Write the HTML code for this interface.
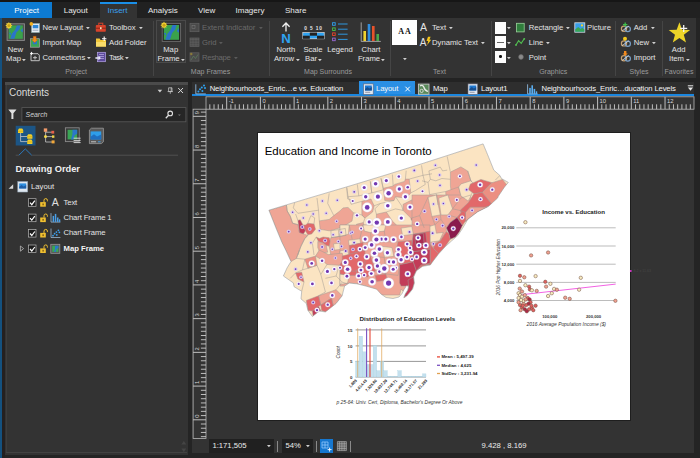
<!DOCTYPE html><html><head><meta charset="utf-8"><title>ArcGIS Pro Layout</title><style>
html,body{margin:0;padding:0}
body{width:700px;height:458px;background:#242424;position:relative;overflow:hidden;font-family:"Liberation Sans",sans-serif;font-size:7.7px;color:#e4e4e4;line-height:10px}
.a{position:absolute;white-space:nowrap}
.t{position:absolute;white-space:nowrap;line-height:10px;height:10px}
.c{text-align:center}
.dis{color:#6b6b6b}
.gl{color:#9b9b9b;font-size:7px}
.sep{position:absolute;width:1px;background:#454545;top:21px;height:55px}
.ar{position:absolute;width:0;height:0;border-left:1.9px solid transparent;border-right:1.9px solid transparent;border-top:2.2px solid #cfcfcf}
.ar.dis{border-top-color:#5a5a5a}
svg{position:absolute;overflow:visible}
</style></head><body>
<div class="a" style="left:0.00px;top:0.00px;width:700.00px;height:18.00px;background:#212121;"></div>
<div class="a" style="left:0.00px;top:0.00px;width:700.00px;height:1.60px;background:#161616;"></div>
<div class="a" style="left:0.00px;top:2.00px;width:52.00px;height:15.50px;background:#0d7bd3;"></div>
<div class="t " style="left:14.20px;top:5.70px;font-size:8px;color:#fff">Project</div>
<div class="t " style="left:63.70px;top:5.70px;font-size:8px;color:#e8e8e8">Layout</div>
<div class="a" style="left:99.50px;top:2.00px;width:37.50px;height:15.60px;background:#333;"></div>
<div class="a" style="left:99.50px;top:2.00px;width:37.50px;height:1.50px;background:#1a8fe8;"></div>
<div class="t " style="left:107.50px;top:5.70px;font-size:8px;color:#3aa0f0">Insert</div>
<div class="t " style="left:148.00px;top:5.70px;font-size:8px;color:#e8e8e8">Analysis</div>
<div class="t " style="left:198.00px;top:5.70px;font-size:8px;color:#e8e8e8">View</div>
<div class="t " style="left:235.50px;top:5.70px;font-size:8px;color:#e8e8e8">Imagery</div>
<div class="t " style="left:285.00px;top:5.70px;font-size:8px;color:#e8e8e8">Share</div>
<div class="a" style="left:0.00px;top:17.50px;width:696.00px;height:60.50px;background:#333;"></div>
<div class="a" style="left:0.00px;top:78.00px;width:700.00px;height:4.00px;background:#232323;"></div>
<div class="sep" style="left:152.5px"></div>
<div class="sep" style="left:268.7px"></div>
<div class="sep" style="left:389.5px"></div>
<div class="sep" style="left:490.5px"></div>
<div class="sep" style="left:615.0px"></div>
<div class="sep" style="left:662.0px"></div>
<div class="t c " style="left:-24.50px;top:45.20px;width:80px;">New</div>
<div class="t c " style="left:-26.50px;top:54.10px;width:80px;">Map</div>
<svg width="4" height="3" viewBox="0 0 4 3" style="left:22.40px;top:58.50px"><path d="M0 0 L3.8 0 L1.9 2.3z" fill="#d0d0d0"/></svg>
<div class="t " style="left:42.50px;top:22.90px;">New Layout</div>
<svg width="4" height="3" viewBox="0 0 4 3" style="left:85.90px;top:27.30px"><path d="M0 0 L3.8 0 L1.9 2.3z" fill="#d0d0d0"/></svg>
<div class="t " style="left:42.50px;top:37.60px;">Import Map</div>
<div class="t " style="left:42.50px;top:52.50px;">Connections</div>
<svg width="4" height="3" viewBox="0 0 4 3" style="left:86.90px;top:56.90px"><path d="M0 0 L3.8 0 L1.9 2.3z" fill="#d0d0d0"/></svg>
<div class="t " style="left:109.00px;top:22.90px;">Toolbox</div>
<svg width="4" height="3" viewBox="0 0 4 3" style="left:139.40px;top:27.30px"><path d="M0 0 L3.8 0 L1.9 2.3z" fill="#d0d0d0"/></svg>
<div class="t " style="left:109.00px;top:37.60px;">Add Folder</div>
<div class="t " style="left:109.00px;top:52.50px;letter-spacing:-.4px">Task</div>
<svg width="4" height="3" viewBox="0 0 4 3" style="left:125.10px;top:56.90px"><path d="M0 0 L3.8 0 L1.9 2.3z" fill="#d0d0d0"/></svg>
<div class="t c gl" style="left:36.20px;top:67.00px;width:80px;">Project</div>
<div class="a" style="left:155.70px;top:19.60px;width:30.60px;height:43.60px;background:#363636;border:1px solid #4a4a4a;box-sizing:border-box"></div>
<div class="t c " style="left:130.70px;top:45.20px;width:80px;">Map</div>
<div class="t c " style="left:128.50px;top:54.10px;width:80px;">Frame</div>
<svg width="4" height="3" viewBox="0 0 4 3" style="left:180.80px;top:58.50px"><path d="M0 0 L3.8 0 L1.9 2.3z" fill="#d0d0d0"/></svg>
<div class="t dis" style="left:202.00px;top:22.90px;">Extent Indicator</div>
<svg width="4" height="3" viewBox="0 0 4 3" style="left:258.60px;top:27.30px"><path d="M0 0 L3.8 0 L1.9 2.3z" fill="#5a5a5a"/></svg>
<div class="t dis" style="left:202.00px;top:37.60px;">Grid</div>
<svg width="4" height="3" viewBox="0 0 4 3" style="left:219.10px;top:42.00px"><path d="M0 0 L3.8 0 L1.9 2.3z" fill="#5a5a5a"/></svg>
<div class="t dis" style="left:202.00px;top:52.50px;letter-spacing:-.35px">Reshape</div>
<svg width="4" height="3" viewBox="0 0 4 3" style="left:233.60px;top:56.90px"><path d="M0 0 L3.8 0 L1.9 2.3z" fill="#5a5a5a"/></svg>
<div class="t c gl" style="left:170.50px;top:67.00px;width:80px;">Map Frames</div>
<div class="t c " style="left:245.80px;top:45.20px;width:80px;">North</div>
<div class="t c " style="left:244.00px;top:54.10px;width:80px;">Arrow</div>
<svg width="4" height="3" viewBox="0 0 4 3" style="left:296.10px;top:58.50px"><path d="M0 0 L3.8 0 L1.9 2.3z" fill="#d0d0d0"/></svg>
<div class="t c " style="left:273.00px;top:45.20px;width:80px;">Scale</div>
<div class="t c " style="left:271.00px;top:54.10px;width:80px;">Bar</div>
<svg width="4" height="3" viewBox="0 0 4 3" style="left:318.10px;top:58.50px"><path d="M0 0 L3.8 0 L1.9 2.3z" fill="#d0d0d0"/></svg>
<div class="t c " style="left:300.00px;top:45.20px;width:80px;">Legend</div>
<div class="t c " style="left:331.00px;top:45.20px;width:80px;">Chart</div>
<div class="t c " style="left:329.00px;top:54.10px;width:80px;">Frame</div>
<svg width="4" height="3" viewBox="0 0 4 3" style="left:381.10px;top:58.50px"><path d="M0 0 L3.8 0 L1.9 2.3z" fill="#d0d0d0"/></svg>
<div class="t c gl" style="left:288.00px;top:67.00px;width:80px;">Map Surrounds</div>
<div class="a" style="left:392.00px;top:19.50px;width:25.00px;height:25.50px;background:#fff;"></div>
<div class="t c" style="left:392px;top:26.6px;width:26px;font-family:'Liberation Serif',serif;font-weight:bold;font-size:8px;color:#111;letter-spacing:.9px">AA</div>
<svg width="4" height="3" viewBox="0 0 4 3" style="left:402.60px;top:57.50px"><path d="M0 0 L3.8 0 L1.9 2.3z" fill="#d0d0d0"/></svg>
<div class="t " style="left:432.00px;top:22.90px;">Text</div>
<svg width="4" height="3" viewBox="0 0 4 3" style="left:448.80px;top:27.30px"><path d="M0 0 L3.8 0 L1.9 2.3z" fill="#d0d0d0"/></svg>
<div class="t " style="left:432.00px;top:37.60px;">Dynamic Text</div>
<svg width="4" height="3" viewBox="0 0 4 3" style="left:480.60px;top:42.00px"><path d="M0 0 L3.8 0 L1.9 2.3z" fill="#d0d0d0"/></svg>
<div class="t c gl" style="left:399.50px;top:67.00px;width:80px;">Text</div>
<div class="a" style="left:494.80px;top:22.00px;width:11.40px;height:12.00px;background:#fdfdfd;"></div>
<svg width="4" height="3" viewBox="0 0 4 3" style="left:507.40px;top:27.30px"><path d="M0 0 L3.8 0 L1.9 2.3z" fill="#d0d0d0"/></svg>
<div class="a" style="left:494.80px;top:35.80px;width:11.40px;height:12.00px;background:#fdfdfd;"></div>
<svg width="4" height="3" viewBox="0 0 4 3" style="left:507.40px;top:42.00px"><path d="M0 0 L3.8 0 L1.9 2.3z" fill="#d0d0d0"/></svg>
<div class="a" style="left:494.80px;top:50.60px;width:11.40px;height:12.00px;background:#fdfdfd;"></div>
<svg width="4" height="3" viewBox="0 0 4 3" style="left:507.40px;top:56.90px"><path d="M0 0 L3.8 0 L1.9 2.3z" fill="#d0d0d0"/></svg>
<div class="a" style="left:497.00px;top:41.50px;width:7.00px;height:0.70px;background:#666;"></div>
<div class="a" style="left:499.30px;top:55.40px;width:2.40px;height:2.40px;background:#111;border-radius:50%"></div>
<div class="t " style="left:528.70px;top:22.90px;">Rectangle</div>
<svg width="4" height="3" viewBox="0 0 4 3" style="left:565.60px;top:27.30px"><path d="M0 0 L3.8 0 L1.9 2.3z" fill="#d0d0d0"/></svg>
<div class="t " style="left:587.00px;top:22.90px;">Picture</div>
<div class="t " style="left:528.70px;top:37.60px;">Line</div>
<svg width="4" height="3" viewBox="0 0 4 3" style="left:546.10px;top:42.00px"><path d="M0 0 L3.8 0 L1.9 2.3z" fill="#d0d0d0"/></svg>
<div class="t " style="left:528.70px;top:52.50px;">Point</div>
<div class="t c gl" style="left:513.20px;top:67.00px;width:80px;">Graphics</div>
<div class="t " style="left:633.70px;top:22.90px;">Add</div>
<svg width="4" height="3" viewBox="0 0 4 3" style="left:650.60px;top:27.30px"><path d="M0 0 L3.8 0 L1.9 2.3z" fill="#d0d0d0"/></svg>
<div class="t " style="left:633.70px;top:37.60px;">New</div>
<svg width="4" height="3" viewBox="0 0 4 3" style="left:651.80px;top:42.00px"><path d="M0 0 L3.8 0 L1.9 2.3z" fill="#d0d0d0"/></svg>
<div class="t " style="left:633.70px;top:52.50px;">Import</div>
<div class="t c gl" style="left:599.00px;top:67.00px;width:80px;">Styles</div>
<div class="t c " style="left:638.70px;top:45.20px;width:80px;">Add</div>
<div class="t c " style="left:636.50px;top:54.10px;width:80px;">Item</div>
<svg width="4" height="3" viewBox="0 0 4 3" style="left:686.40px;top:58.50px"><path d="M0 0 L3.8 0 L1.9 2.3z" fill="#d0d0d0"/></svg>
<div class="t c gl" style="left:639.00px;top:67.00px;width:80px;">Favorites</div>
<svg width="700" height="82" viewBox="0 0 700 82" style="left:0;top:0"><rect x="7.1" y="23.8" width="17.3" height="16.6" fill="#4e4e4e" stroke="#8c8c8c" stroke-width=".9"/><rect x="8.7" y="25.4" width="14.1" height="13.4" fill="#3aa24c"/><path d="M16.9 25.4 l3.7 0 l-1.4 4.3 l-2.8 2.9 l-2.0 6.2 l-4.2 0 l1.7 -5.4 l3.1 -3.5 z" fill="#2b74c8"/><path d="M22.8 28.1 l0 4.3 l-2.3 -1.6 z" fill="#2b74c8"/><path d="M8.7 32.8 l2.2 0 l0 2.6 z" fill="#2b74c8"/><polygon points="12.5,25.6 11.0,26.5 11.4,28.1 9.8,27.7 8.9,29.2 8.0,27.7 6.4,28.1 6.8,26.5 5.3,25.6 6.8,24.7 6.4,23.1 8.0,23.5 8.9,22.0 9.8,23.5 11.4,23.1 11.0,24.7" fill="#f0d030"/><circle cx="8.9" cy="25.6" r="1.5" fill="#c8a018"/><rect x="162.2" y="23.4" width="18.4" height="18.0" fill="#262626" stroke="#6c6c6c" stroke-width=".9"/><rect x="163.8" y="25.0" width="15.2" height="14.8" fill="#3aa24c"/><path d="M172.6 25.0 l4.0 0 l-1.5 4.7 l-3.0 3.3 l-2.1 6.8 l-4.6 0 l1.8 -5.9 l3.3 -3.8 z" fill="#2b74c8"/><path d="M179.0 28.0 l0 4.7 l-2.4 -1.8 z" fill="#2b74c8"/><path d="M163.8 33.1 l2.2 0 l0 2.6 z" fill="#2b74c8"/><polygon points="167.6,25.2 166.1,26.1 166.5,27.7 164.9,27.3 164.0,28.8 163.1,27.3 161.5,27.7 161.9,26.1 160.4,25.2 161.9,24.3 161.5,22.7 163.1,23.1 164.0,21.6 164.9,23.1 166.5,22.7 166.1,24.3" fill="#f0d030"/><circle cx="164.0" cy="25.2" r="1.5" fill="#c8a018"/><rect x="31.5" y="23.5" width="8" height="9" fill="#e9eef5" stroke="#8aa" stroke-width=".6"/><rect x="32.7" y="24.9" width="5.6" height="3.4" fill="#2b86d8"/><rect x="32.7" y="29.7" width="5.6" height="1" fill="#9ab"/><circle cx="31.3" cy="23.9" r="1.8" fill="#f2b01e"/><rect x="30.5" y="38.7" width="9" height="8.5" fill="#3aa655" stroke="#aaa" stroke-width=".7"/><path d="M33 41.2 l4 0 l0 3 l-4 0z" fill="#2b78c9"/><path d="M33.2 36.2 l3 0 l0 3.2 l1.8 0 l-3.3 3.4 l-3.3 -3.4 l1.8 0z" fill="#f28a1e" stroke="#a55208" stroke-width=".3"/><path d="M31 53.7 l7 0 l1.3 1.5 l0 5.5 l-8.3 0z" fill="none" stroke="#d0d0d0" stroke-width=".9"/><path d="M33 57.7 l4 0 M35 55.9 l0 3.6" stroke="#d0d0d0" stroke-width=".9"/><path d="M30 53.4 l3 0 M31.5 51.9 l0 3" stroke="#fff" stroke-width=".9"/><rect x="95.8" y="25.1" width="10" height="6.6" rx=".8" fill="#d8432b"/><rect x="98.8" y="23.2" width="4" height="2.4" fill="none" stroke="#d8432b" stroke-width="1"/><rect x="95.8" y="27.7" width="10" height="1" fill="#8a2415"/><rect x="100" y="27.2" width="1.6" height="2" fill="#f2e6c0"/><path d="M96 38.6 l3.6 0 l1 1.4 l5.4 0 l0 6.6 l-10 0z" fill="#f0c63a"/><path d="M96 42.0 l10 0 l0 4.6 l-10 0z" fill="#f8dc6a"/><path d="M102 38.8 l4.4 0 M104.2 36.6 l0 4.4" stroke="#fff" stroke-width="1.1"/><rect x="97.5" y="52.3" width="8" height="9.4" fill="#5d4a9c" stroke="#b7a8e8" stroke-width=".7"/><path d="M99 54.5 l5 0 M99 56.5 l5 0 M99 58.5 l5 0" stroke="#cfc6f0" stroke-width=".6"/><path d="M95.4 57.2 l3 0 l0 -1.6 l2.4 2.4 l-2.4 2.4 l0 -1.6 l-3 0z" fill="#e8e8f8"/><rect x="190" y="23.3" width="9" height="8.4" fill="#4a4a4a" stroke="#626262" stroke-width=".7"/><rect x="190" y="38.0" width="9" height="8.4" fill="#4a4a4a" stroke="#626262" stroke-width=".7"/><rect x="190" y="52.8" width="9" height="8.4" fill="#4a4a4a" stroke="#626262" stroke-width=".7"/><rect x="192" y="25.5" width="3" height="3" fill="none" stroke="#777" stroke-width=".6"/><path d="M190 42.2 l9 0 M193 38 l0 8.4 M196 38 l0 8.4 M190 39.6 l9 0 M190 44.8 l9 0" stroke="#666" stroke-width=".5"/><path d="M191 60 l2.5 -4 l2 2.5 l2.5 -4" stroke="#5c7a5c" stroke-width=".8" fill="none"/><circle cx="191.3" cy="54" r="1.2" fill="#8a7a3a"/><path d="M286 23 l0 8.4 M282.4 26.8 l3.6 -3.8 l3.6 3.8" stroke="#f0f0f0" stroke-width="1.3" fill="none"/><text x="286" y="42.5" text-anchor="middle" font-family="Liberation Sans,sans-serif" font-weight="bold" font-size="13.2" fill="#2ea3f2">N</text><text x="313.5" y="30" text-anchor="middle" font-family="Liberation Sans,sans-serif" font-weight="bold" font-size="4.8" fill="#e8e8e8" letter-spacing=".9" xml:space="preserve">0 5 10</text><rect x="302.8" y="32.6" width="21.4" height="6.2" fill="#2ea3f2" stroke="#e0e0e0" stroke-width=".7"/><rect x="302.8" y="35.7" width="7" height="3.1" fill="#222"/><rect x="309.8" y="32.6" width="7.2" height="3.1" fill="#222"/><rect x="317" y="35.7" width="7.2" height="3.1" fill="#222"/><rect x="332.6" y="22.7" width="2.6" height="2.6" fill="none" stroke="#2ea3f2" stroke-width=".9"/><path d="M338 24.0 l9.6 0" stroke="#2ea3f2" stroke-width=".9"/><rect x="332.6" y="27.9" width="2.6" height="2.6" fill="none" stroke="#4ac04a" stroke-width=".9"/><path d="M338 29.2 l9.6 0" stroke="#2ea3f2" stroke-width=".9"/><rect x="332.6" y="32.9" width="2.6" height="2.6" fill="none" stroke="#e8452b" stroke-width=".9"/><path d="M338 34.2 l9.6 0" stroke="#2ea3f2" stroke-width=".9"/><rect x="332.6" y="38.1" width="2.6" height="2.6" fill="none" stroke="#9a6ad8" stroke-width=".9"/><path d="M338 39.4 l9.6 0" stroke="#2ea3f2" stroke-width=".9"/><path d="M361.2 22.4 l0 19 l19.6 0" stroke="#bdbdbd" stroke-width=".8" fill="none"/><rect x="363.4" y="31" width="2.6" height="10" fill="#f0d22e"/><rect x="367.7" y="24" width="2.6" height="17" fill="#2e8ee0"/><rect x="372" y="26" width="2.6" height="15" fill="#e8532b"/><rect x="376.4" y="34" width="2.6" height="7" fill="#4aa84a"/><text x="423.5" y="31" text-anchor="middle" font-family="Liberation Sans,sans-serif" font-size="10.5" fill="#e4e4e4">A</text><text x="423" y="45.7" text-anchor="middle" font-family="Liberation Sans,sans-serif" font-size="10" fill="#e4e4e4">A</text><path d="M428 36.8 l2.6 0 l-1.2 3 l1.8 0 l-4 5.2 l1 -3.9 l-1.7 0z" fill="#f5c518"/><rect x="516.4" y="23.3" width="7.8" height="8.6" fill="#2f7d3c" stroke="#9ad09a" stroke-width=".8"/><path d="M516 45 l2.6 -4.4 l2.6 2.8 l3 -4.6" stroke="#52c052" stroke-width="1.1" fill="none"/><circle cx="516" cy="45" r=".9" fill="#52c052"/><circle cx="524.3" cy="38.8" r=".9" fill="#52c052"/><circle cx="521" cy="57" r="2.4" fill="#8a8a8a" stroke="#6a6a6a" stroke-width=".6"/><rect x="574.8" y="22.8" width="10" height="9.4" fill="#3a9ee8" stroke="#e0e0e0" stroke-width=".8"/><path d="M575.2 31.8 l0 -2.2 l3 -2.6 l2.4 2 l1.6 -1.2 l2.2 1.8 l0 2.2z" fill="#3aa655"/><rect x="575.2" y="29.8" width="9.2" height="2" fill="#2e6fc0" opacity=".0"/><circle cx="582" cy="25.4" r="1.1" fill="#f5d22e"/><circle cx="624" cy="28.7" r="2.6" fill="none" stroke="#c8a070" stroke-width="1.2"/><circle cx="627.8" cy="29.1" r="2.6" fill="none" stroke="#7aa0c8" stroke-width="1.2"/><path d="M622 31.0 l7 -5" stroke="#d8d8d8" stroke-width=".8"/><circle cx="624" cy="43.4" r="2.6" fill="none" stroke="#c8a070" stroke-width="1.2"/><circle cx="627.8" cy="43.8" r="2.6" fill="none" stroke="#7aa0c8" stroke-width="1.2"/><path d="M622 45.7 l7 -5" stroke="#d8d8d8" stroke-width=".8"/><circle cx="624" cy="58.2" r="2.6" fill="none" stroke="#c8a070" stroke-width="1.2"/><circle cx="627.8" cy="58.6" r="2.6" fill="none" stroke="#7aa0c8" stroke-width="1.2"/><path d="M622 60.5 l7 -5" stroke="#d8d8d8" stroke-width=".8"/><path d="M623 24.6 l4.4 0 M625.2 22.4 l0 4.4" stroke="#3ec04a" stroke-width="1.3"/><circle cx="625" cy="38.8" r="2" fill="#f2c81e"/><path d="M624 51 l2.4 0 l0 2.4 l1.4 0 l-2.6 2.6 l-2.6 -2.6 l1.4 0z" fill="#f28a1e"/><polygon points="679.4,22.2 682.1,29.7 690.1,29.9 683.8,34.8 686.0,42.5 679.4,38.0 672.8,42.5 675.0,34.8 668.7,29.9 676.7,29.7" fill="#ecd428"/><path d="M680.2 28.4 l7 0 M683.7 24.9 l0 7" stroke="#f4f4f4" stroke-width="1.3"/></svg>
<div class="a" style="left:0.00px;top:18.00px;width:1.90px;height:440.00px;background:#14517f;"></div>
<div class="a" style="left:1.90px;top:78.00px;width:3.20px;height:380.00px;background:#242020;"></div>
<div class="a" style="left:5.00px;top:82.00px;width:183.00px;height:373.00px;background:#333;"></div>
<div class="a" style="left:6.20px;top:84.50px;width:0.60px;height:368.00px;background:#3c3c3c;"></div>
<div class="a" style="left:5.00px;top:82.00px;width:183.00px;height:2.50px;background:#4b4b4b;"></div>
<div class="a" style="left:6.20px;top:452.40px;width:181.00px;height:0.80px;background:#424242;"></div>
<div class="t " style="left:9.00px;top:87.60px;font-size:10px;color:#dcdcdc;line-height:12px;height:12px;margin-top:-1px">Contents</div>
<svg width="700" height="458" viewBox="0 0 700 458" style="left:0;top:0"><path d="M157.6 89.8 l4.6 0 l-2.3 2.6z" fill="#d0d0d0"/><path d="M168.6 87.8 l3.4 0 l0 3.7 l-3.4 0z M171.2 87.8 l0 3.7 M167.6 91.6 l5.4 0 M170.3 91.6 l0 2.2" stroke="#c8c8c8" stroke-width=".75" fill="none"/><path d="M178.2 88 l4.8 5 M183 88 l-4.8 5" stroke="#d8d8d8" stroke-width="1"/><path d="M8.3 109.4 l8.2 0 l-3.1 3.8 l0 5.8 l-2 0 l0 -5.8z" fill="#e0e0e0"/><rect x="21.9" y="107.6" width="164" height="14.2" fill="#262626" stroke="#5a5a5a" stroke-width=".8"/><circle cx="170.2" cy="113.4" r="2.3" fill="none" stroke="#e0e0e0" stroke-width="1.1"/><path d="M168.6 115.2 l-2.8 3" stroke="#e0e0e0" stroke-width="1.3"/><path d="M178 114.4 l2.8 0 l-1.4 1.6z" fill="#777"/><rect x="15.7" y="125.8" width="19.8" height="19.7" fill="#1c5585"/><path d="M20.6 133 l0 8.6 l7 0 M20.6 136.5 l7 0" stroke="#c8c8c8" stroke-width=".8" fill="none"/><path d="M18.0 130.1 l1 -1.5 l3.2 0 l1 1.5 l0 3 l-5.2 0z" fill="#f2cf2a"/><path d="M18.0 131.2 l5.2 0" stroke="#b89010" stroke-width=".5"/><path d="M27.2 135.7 l1 -1.5 l3.2 0 l1 1.5 l0 3 l-5.2 0z" fill="#f2cf2a"/><path d="M27.2 136.8 l5.2 0" stroke="#b89010" stroke-width=".5"/><path d="M27.2 140.9 l1 -1.5 l3.2 0 l1 1.5 l0 3 l-5.2 0z" fill="#f2cf2a"/><path d="M27.2 142.0 l5.2 0" stroke="#b89010" stroke-width=".5"/><path d="M45.6 131.5 l0 10.5 l6.5 0 M45.6 132.2 l6.5 0 M45.6 136.6 l6.5 0" stroke="#c8c8c8" stroke-width=".8" fill="none"/><rect x="43.8" y="128.4" width="3.4" height="3.4" fill="#f29a6a"/><rect x="51.4" y="130.8" width="2.8" height="2.8" fill="#e8604a"/><circle cx="45.5" cy="136.6" r="1.5" fill="#f2d84a"/><rect x="52" y="135.4" width="2.4" height="2.4" fill="#f2d84a"/><rect x="51.6" y="140.4" width="3" height="3" fill="#f2a83a"/><rect x="65.4" y="127.8" width="13.8" height="13.8" fill="#3a3a3a" stroke="#8a8a8a" stroke-width=".9"/><rect x="67.6" y="129.8" width="9.6" height="9.6" fill="#3aa655"/><path d="M72.5 129.8 l4.7 0 l0 4 l-2.6 1.4 l-1 4.2 l-2.6 0 l1.3 -4.6z" fill="#2b78c9"/><path d="M73.6 138.2 l7 0 M73.6 140.4 l7 0 M73.6 142.6 l7 0" stroke="#e0e0e0" stroke-width=".9"/><path d="M89.4 130 l2 -1.8 l12 0 l0 13.6 l-2 1.8 l-12 0z" fill="#5a5a5a" stroke="#9a9a9a" stroke-width=".8"/><rect x="90.6" y="131.4" width="10.6" height="8" fill="#2e9eea"/><path d="M90.6 139.4 l0 -2.6 l3.4 -2.6 l3 2.2 l4.2 -2 l0 5z" fill="#1f6fc0"/><path d="M91 141.8 l5 0" stroke="#ddd" stroke-width=".8"/><path d="M98 141.8 l2.6 0" stroke="#3aa0f0" stroke-width=".9"/><path d="M15.7 155.2 l3.2 0 M31.7 155.2 l146.3 0" stroke="#585858" stroke-width=".8" fill="none"/><path d="M18.9 155.2 l6.4 -6.3 l6.4 6.3" stroke="#2a7fca" stroke-width=".9" fill="none"/><path d="M13.2 184.2 l0 4.6 l-4.6 0z" fill="#d8d8d8"/><path d="M20.4 246 l3.2 2.6 l-3.2 2.6z" fill="none" stroke="#c8c8c8" stroke-width=".7"/><rect x="17.8" y="181.6" width="9.8" height="10.4" fill="#dfe7f0" stroke="#9ab" stroke-width=".6"/><rect x="19.2" y="183.4" width="7" height="5" fill="#2e8ee0"/><path d="M19.2 188.4 l0 -1.6 l2.4 -1.8 l2 1.4 l2.6 -1.4 l0 3.4z" fill="#1f5fa8"/><rect x="28.4" y="198.7" width="7.6" height="7.6" fill="#1c1c1c" stroke="#b8b8b8" stroke-width=".7"/><path d="M30 202.7 l1.8 2 l3 -4" stroke="#fff" stroke-width="1.2" fill="none"/><rect x="40.2" y="202.1" width="5.6" height="4.6" fill="#f0c030"/><path d="M44 202.3 l0 -2 a1.7 1.7 0 0 1 3.4 0 l0 1" stroke="#f0c030" stroke-width="1" fill="none"/><rect x="42.5" y="203.5" width="1.2" height="1.8" fill="#6a4a10"/><rect x="28.4" y="214.1" width="7.6" height="7.6" fill="#1c1c1c" stroke="#b8b8b8" stroke-width=".7"/><path d="M30 218.1 l1.8 2 l3 -4" stroke="#fff" stroke-width="1.2" fill="none"/><rect x="40.2" y="217.5" width="5.6" height="4.6" fill="#f0c030"/><path d="M44 217.7 l0 -2 a1.7 1.7 0 0 1 3.4 0 l0 1" stroke="#f0c030" stroke-width="1" fill="none"/><rect x="42.5" y="218.9" width="1.2" height="1.8" fill="#6a4a10"/><rect x="28.4" y="229.5" width="7.6" height="7.6" fill="#1c1c1c" stroke="#b8b8b8" stroke-width=".7"/><path d="M30 233.5 l1.8 2 l3 -4" stroke="#fff" stroke-width="1.2" fill="none"/><rect x="40.2" y="232.9" width="5.6" height="4.6" fill="#f0c030"/><path d="M44 233.1 l0 -2 a1.7 1.7 0 0 1 3.4 0 l0 1" stroke="#f0c030" stroke-width="1" fill="none"/><rect x="42.5" y="234.3" width="1.2" height="1.8" fill="#6a4a10"/><rect x="28.4" y="245.0" width="7.6" height="7.6" fill="#1c1c1c" stroke="#b8b8b8" stroke-width=".7"/><path d="M30 249.0 l1.8 2 l3 -4" stroke="#fff" stroke-width="1.2" fill="none"/><rect x="40.2" y="248.4" width="5.6" height="4.6" fill="#f0c030"/><path d="M44 248.6 l0 -2 a1.7 1.7 0 0 1 3.4 0 l0 1" stroke="#f0c030" stroke-width="1" fill="none"/><rect x="42.5" y="249.8" width="1.2" height="1.8" fill="#6a4a10"/><text x="55.3" y="206.2" text-anchor="middle" font-family="Liberation Sans,sans-serif" font-size="10.5" fill="#e0e0e0">A</text><path d="M51 213.1 l0 9 l9.4 0" stroke="#a8c8e8" stroke-width=".7" fill="none"/><rect x="52.6" y="215.9" width="1.5" height="6" fill="#4aa0e8"/><rect x="54.8" y="213.9" width="1.5" height="8" fill="#4aa0e8"/><rect x="57" y="217.5" width="1.5" height="4.4" fill="#4aa0e8"/><rect x="59" y="219.3" width="1.3" height="2.6" fill="#4aa0e8"/><path d="M51 228.5 l0 9 l9.4 0" stroke="#a8c8e8" stroke-width=".7" fill="none"/><circle cx="53.0" cy="235.7" r=".9" fill="#3aa0f0"/><circle cx="54.6" cy="233.7" r=".9" fill="#3aa0f0"/><circle cx="56.4" cy="232.1" r=".9" fill="#3aa0f0"/><circle cx="56.8" cy="234.9" r=".9" fill="#3aa0f0"/><circle cx="58.4" cy="230.3" r=".9" fill="#3aa0f0"/><circle cx="59.4" cy="232.3" r=".9" fill="#3aa0f0"/><rect x="50.8" y="244.3" width="9" height="9" fill="#555" stroke="#9a9a9a" stroke-width=".8"/><rect x="52.2" y="245.7" width="6.2" height="6.2" fill="#3aa655"/><path d="M55 245.7 l3.4 0 l0 2.4 l-2 1.2 l-.6 2.6 l-1.8 0 l1 -3z" fill="#2b78c9"/><path d="M181.4 444.6 l2.4 -3.6 l2.4 3.6z M181.4 448.6 l2.4 3.6 l2.4 -3.6z" fill="#454545"/></svg><div class="t" style="left:25.6px;top:109.6px;font-style:italic;font-size:6.9px;color:#d0d0d0">Search</div><div class="t" style="left:15.4px;top:162.8px;font-weight:bold;font-size:9.3px;line-height:12px;height:12px;color:#f0f0f0">Drawing Order</div><div class="t" style="left:31px;top:182.2px">Layout</div><div class="t" style="left:63.5px;top:197.6px;letter-spacing:-.12px">Text</div><div class="t" style="left:63.5px;top:213px;letter-spacing:-.12px">Chart Frame 1</div><div class="t" style="left:63.5px;top:228.4px;letter-spacing:-.12px">Chart Frame</div><div class="t" style="left:63.5px;top:243.9px;font-weight:bold;color:#f4f4f4">Map Frame</div>
<div class="a" style="left:191.80px;top:82.00px;width:502.70px;height:371.00px;background:#333;"></div>
<div class="a" style="left:191.8px;top:82px;width:502.7px;height:12px;background:#2e2e2e"></div><div class="a" style="left:359px;top:81px;width:56px;height:14px;background:#2a8fe4"></div><div class="a" style="left:191.8px;top:94px;width:502.7px;height:2.2px;background:#1a86de"></div><div class="t" style="left:209.7px;top:84.1px;color:#f6f6f6;letter-spacing:-.14px">Neighbourhoods_Enric…e vs. Education</div><div class="t" style="left:376.0px;top:84.1px;color:#f6f6f6;letter-spacing:-.14px">Layout</div><div class="t" style="left:433.0px;top:84.1px;color:#f6f6f6;letter-spacing:-.14px">Map</div><div class="t" style="left:481.0px;top:84.1px;color:#f6f6f6;letter-spacing:-.14px">Layout1</div><div class="t" style="left:541.5px;top:84.1px;color:#f6f6f6;letter-spacing:-.14px">Neighbourhoods_Enric…ducation Levels</div><svg width="700" height="458" viewBox="0 0 700 458" style="left:0;top:0"><g transform="translate(0 .9)"><path d="M195.8 83.4 l0 9.6 l10 0" stroke="#9ac8f0" stroke-width=".8" fill="none"/><circle cx="198.4" cy="90.6" r="1" fill="#2ea3f2"/><circle cx="200.0" cy="88.4" r="1" fill="#2ea3f2"/><circle cx="201.8" cy="86.6" r="1" fill="#2ea3f2"/><circle cx="202.4" cy="90.0" r="1" fill="#2ea3f2"/><circle cx="204.0" cy="84.6" r="1" fill="#2ea3f2"/><circle cx="205.0" cy="87.2" r="1" fill="#2ea3f2"/><rect x="363.6" y="83.0" width="9.6" height="10.4" fill="#dfe7f0" stroke="#667" stroke-width=".6"/><rect x="365.0" y="84.6" width="6.8" height="5" fill="#1f78d0"/><path d="M365.0 89.6 l0 -1.6 l2.4 -1.8 l2 1.4 l2.4 -1.4 l0 3.4z" fill="#174f90"/><path d="M365.2 91.4 l5 0" stroke="#778" stroke-width=".7"/><rect x="468.0" y="83.0" width="9.6" height="10.4" fill="#dfe7f0" stroke="#667" stroke-width=".6"/><rect x="469.4" y="84.6" width="6.8" height="5" fill="#1f78d0"/><path d="M469.4 89.6 l0 -1.6 l2.4 -1.8 l2 1.4 l2.4 -1.4 l0 3.4z" fill="#174f90"/><path d="M469.6 91.4 l5 0" stroke="#778" stroke-width=".7"/><path d="M405.4 85.8 l4.4 4.6 M409.8 85.8 l-4.4 4.6" stroke="#fff" stroke-width="1"/><rect x="418.4" y="83.2" width="10.6" height="10.2" fill="#5a8a5a" stroke="#c8c8c8" stroke-width=".9"/><path d="M420 85 q3 -1.4 4 1.6 q.6 3 4 4" stroke="#e8e8e8" stroke-width="1.3" fill="none"/><circle cx="421.6" cy="90" r="1.6" fill="none" stroke="#e0e0e0" stroke-width=".9"/><path d="M527.6 83.4 l0 9.6 l10 0" stroke="#9ac8f0" stroke-width=".8" fill="none"/><rect x="529.2" y="87" width="1.6" height="6" fill="#5aaef0"/><rect x="531.4" y="84.4" width="1.6" height="8.6" fill="#5aaef0"/><rect x="533.6" y="88" width="1.6" height="5" fill="#5aaef0"/><rect x="535.8" y="90.4" width="1.4" height="2.6" fill="#5aaef0"/><path d="M687.8 84.9 l5.4 0" stroke="#e8e8e8" stroke-width="1"/><path d="M687.9 86.7 l5.2 0 l-2.6 3.2z" fill="#e8e8e8"/></g><rect x="206" y="96.8" width="488" height="12.4" fill="#333" stroke="#b8b8b8" stroke-width=".8"/><rect x="193.1" y="109.2" width="12.9" height="329.2" fill="#333" stroke="#b8b8b8" stroke-width=".8"/><path d="M209.82 104.3 l0 4.9 M214.03 104.3 l0 4.9 M218.25 104.3 l0 4.9 M222.46 104.3 l0 4.9 M226.68 96.8 l0 12.4 M230.89 104.3 l0 4.9 M235.11 104.3 l0 4.9 M239.32 104.3 l0 4.9 M243.54 104.3 l0 4.9 M247.75 104.3 l0 4.9 M251.97 104.3 l0 4.9 M256.19 104.3 l0 4.9 M260.40 96.8 l0 12.4 M264.61 104.3 l0 4.9 M268.83 104.3 l0 4.9 M273.04 104.3 l0 4.9 M277.26 104.3 l0 4.9 M281.47 104.3 l0 4.9 M285.69 104.3 l0 4.9 M289.90 104.3 l0 4.9 M294.12 96.8 l0 12.4 M298.33 104.3 l0 4.9 M302.55 104.3 l0 4.9 M306.76 104.3 l0 4.9 M310.98 104.3 l0 4.9 M315.19 104.3 l0 4.9 M319.41 104.3 l0 4.9 M323.62 104.3 l0 4.9 M327.84 96.8 l0 12.4 M332.05 104.3 l0 4.9 M336.27 104.3 l0 4.9 M340.48 104.3 l0 4.9 M344.70 104.3 l0 4.9 M348.91 104.3 l0 4.9 M353.13 104.3 l0 4.9 M357.34 104.3 l0 4.9 M361.56 96.8 l0 12.4 M365.77 104.3 l0 4.9 M369.99 104.3 l0 4.9 M374.20 104.3 l0 4.9 M378.42 104.3 l0 4.9 M382.63 104.3 l0 4.9 M386.85 104.3 l0 4.9 M391.06 104.3 l0 4.9 M395.28 96.8 l0 12.4 M399.50 104.3 l0 4.9 M403.71 104.3 l0 4.9 M407.92 104.3 l0 4.9 M412.14 104.3 l0 4.9 M416.35 104.3 l0 4.9 M420.57 104.3 l0 4.9 M424.78 104.3 l0 4.9 M429.00 96.8 l0 12.4 M433.21 104.3 l0 4.9 M437.43 104.3 l0 4.9 M441.64 104.3 l0 4.9 M445.86 104.3 l0 4.9 M450.07 104.3 l0 4.9 M454.29 104.3 l0 4.9 M458.50 104.3 l0 4.9 M462.72 96.8 l0 12.4 M466.93 104.3 l0 4.9 M471.15 104.3 l0 4.9 M475.37 104.3 l0 4.9 M479.58 104.3 l0 4.9 M483.79 104.3 l0 4.9 M488.01 104.3 l0 4.9 M492.22 104.3 l0 4.9 M496.44 96.8 l0 12.4 M500.65 104.3 l0 4.9 M504.87 104.3 l0 4.9 M509.08 104.3 l0 4.9 M513.30 104.3 l0 4.9 M517.51 104.3 l0 4.9 M521.73 104.3 l0 4.9 M525.94 104.3 l0 4.9 M530.16 96.8 l0 12.4 M534.38 104.3 l0 4.9 M538.59 104.3 l0 4.9 M542.80 104.3 l0 4.9 M547.02 104.3 l0 4.9 M551.23 104.3 l0 4.9 M555.45 104.3 l0 4.9 M559.66 104.3 l0 4.9 M563.88 96.8 l0 12.4 M568.10 104.3 l0 4.9 M572.31 104.3 l0 4.9 M576.52 104.3 l0 4.9 M580.74 104.3 l0 4.9 M584.95 104.3 l0 4.9 M589.17 104.3 l0 4.9 M593.38 104.3 l0 4.9 M597.60 96.8 l0 12.4 M601.81 104.3 l0 4.9 M606.03 104.3 l0 4.9 M610.24 104.3 l0 4.9 M614.46 104.3 l0 4.9 M618.67 104.3 l0 4.9 M622.89 104.3 l0 4.9 M627.11 104.3 l0 4.9 M631.32 96.8 l0 12.4 M635.53 104.3 l0 4.9 M639.75 104.3 l0 4.9 M643.96 104.3 l0 4.9 M648.18 104.3 l0 4.9 M652.39 104.3 l0 4.9 M656.61 104.3 l0 4.9 M660.83 104.3 l0 4.9 M665.04 96.8 l0 12.4 M669.25 104.3 l0 4.9 M673.47 104.3 l0 4.9 M677.68 104.3 l0 4.9 M681.90 104.3 l0 4.9 M686.12 104.3 l0 4.9 M690.33 104.3 l0 4.9 M200.9 436.66 l5.1 0 M200.9 432.44 l5.1 0 M200.9 428.23 l5.1 0 M200.9 424.01 l5.1 0 M193.1 419.80 l12.9 0 M200.9 415.59 l5.1 0 M200.9 411.37 l5.1 0 M200.9 407.16 l5.1 0 M200.9 402.94 l5.1 0 M200.9 398.73 l5.1 0 M200.9 394.51 l5.1 0 M200.9 390.30 l5.1 0 M193.1 386.08 l12.9 0 M200.9 381.87 l5.1 0 M200.9 377.65 l5.1 0 M200.9 373.44 l5.1 0 M200.9 369.22 l5.1 0 M200.9 365.00 l5.1 0 M200.9 360.79 l5.1 0 M200.9 356.58 l5.1 0 M193.1 352.36 l12.9 0 M200.9 348.14 l5.1 0 M200.9 343.93 l5.1 0 M200.9 339.72 l5.1 0 M200.9 335.50 l5.1 0 M200.9 331.29 l5.1 0 M200.9 327.07 l5.1 0 M200.9 322.86 l5.1 0 M193.1 318.64 l12.9 0 M200.9 314.43 l5.1 0 M200.9 310.21 l5.1 0 M200.9 306.00 l5.1 0 M200.9 301.78 l5.1 0 M200.9 297.56 l5.1 0 M200.9 293.35 l5.1 0 M200.9 289.13 l5.1 0 M193.1 284.92 l12.9 0 M200.9 280.71 l5.1 0 M200.9 276.49 l5.1 0 M200.9 272.27 l5.1 0 M200.9 268.06 l5.1 0 M200.9 263.85 l5.1 0 M200.9 259.63 l5.1 0 M200.9 255.42 l5.1 0 M193.1 251.20 l12.9 0 M200.9 246.99 l5.1 0 M200.9 242.77 l5.1 0 M200.9 238.56 l5.1 0 M200.9 234.34 l5.1 0 M200.9 230.13 l5.1 0 M200.9 225.91 l5.1 0 M200.9 221.70 l5.1 0 M193.1 217.48 l12.9 0 M200.9 213.27 l5.1 0 M200.9 209.05 l5.1 0 M200.9 204.84 l5.1 0 M200.9 200.62 l5.1 0 M200.9 196.41 l5.1 0 M200.9 192.19 l5.1 0 M200.9 187.98 l5.1 0 M193.1 183.76 l12.9 0 M200.9 179.55 l5.1 0 M200.9 175.33 l5.1 0 M200.9 171.12 l5.1 0 M200.9 166.90 l5.1 0 M200.9 162.69 l5.1 0 M200.9 158.47 l5.1 0 M200.9 154.25 l5.1 0 M193.1 150.04 l12.9 0 M200.9 145.83 l5.1 0 M200.9 141.61 l5.1 0 M200.9 137.40 l5.1 0 M200.9 133.18 l5.1 0 M200.9 128.97 l5.1 0 M200.9 124.75 l5.1 0 M200.9 120.54 l5.1 0 M193.1 116.32 l12.9 0 M200.9 112.11 l5.1 0 " stroke="#c6c6c6" stroke-width=".95" fill="none"/><text x="228.7" y="102.6" font-family="Liberation Sans,sans-serif" font-size="5.8" fill="#d8d8d8">-1</text><text x="262.4" y="102.6" font-family="Liberation Sans,sans-serif" font-size="5.8" fill="#d8d8d8">0</text><text x="296.1" y="102.6" font-family="Liberation Sans,sans-serif" font-size="5.8" fill="#d8d8d8">1</text><text x="329.8" y="102.6" font-family="Liberation Sans,sans-serif" font-size="5.8" fill="#d8d8d8">2</text><text x="363.6" y="102.6" font-family="Liberation Sans,sans-serif" font-size="5.8" fill="#d8d8d8">3</text><text x="397.3" y="102.6" font-family="Liberation Sans,sans-serif" font-size="5.8" fill="#d8d8d8">4</text><text x="431.0" y="102.6" font-family="Liberation Sans,sans-serif" font-size="5.8" fill="#d8d8d8">5</text><text x="464.7" y="102.6" font-family="Liberation Sans,sans-serif" font-size="5.8" fill="#d8d8d8">6</text><text x="498.4" y="102.6" font-family="Liberation Sans,sans-serif" font-size="5.8" fill="#d8d8d8">7</text><text x="532.2" y="102.6" font-family="Liberation Sans,sans-serif" font-size="5.8" fill="#d8d8d8">8</text><text x="565.9" y="102.6" font-family="Liberation Sans,sans-serif" font-size="5.8" fill="#d8d8d8">9</text><text x="599.6" y="102.6" font-family="Liberation Sans,sans-serif" font-size="5.8" fill="#d8d8d8">10</text><text x="633.3" y="102.6" font-family="Liberation Sans,sans-serif" font-size="5.8" fill="#d8d8d8">11</text><text x="667.0" y="102.6" font-family="Liberation Sans,sans-serif" font-size="5.8" fill="#d8d8d8">12</text><text transform="translate(199.4 417.8) rotate(-90)" font-family="Liberation Sans,sans-serif" font-size="5.8" fill="#d8d8d8">0</text><text transform="translate(199.4 384.1) rotate(-90)" font-family="Liberation Sans,sans-serif" font-size="5.8" fill="#d8d8d8">1</text><text transform="translate(199.4 350.4) rotate(-90)" font-family="Liberation Sans,sans-serif" font-size="5.8" fill="#d8d8d8">2</text><text transform="translate(199.4 316.6) rotate(-90)" font-family="Liberation Sans,sans-serif" font-size="5.8" fill="#d8d8d8">3</text><text transform="translate(199.4 282.9) rotate(-90)" font-family="Liberation Sans,sans-serif" font-size="5.8" fill="#d8d8d8">4</text><text transform="translate(199.4 249.2) rotate(-90)" font-family="Liberation Sans,sans-serif" font-size="5.8" fill="#d8d8d8">5</text><text transform="translate(199.4 215.5) rotate(-90)" font-family="Liberation Sans,sans-serif" font-size="5.8" fill="#d8d8d8">6</text><text transform="translate(199.4 181.8) rotate(-90)" font-family="Liberation Sans,sans-serif" font-size="5.8" fill="#d8d8d8">7</text><text transform="translate(199.4 148.0) rotate(-90)" font-family="Liberation Sans,sans-serif" font-size="5.8" fill="#d8d8d8">8</text><text transform="translate(199.4 114.3) rotate(-90)" font-family="Liberation Sans,sans-serif" font-size="5.8" fill="#d8d8d8">9</text></svg><div class="a" style="left:258.3px;top:133px;width:372.2px;height:287.3px;background:#fff;box-shadow:0 0 0 .9px #1c1c1c"></div><div class="a" style="left:264.7px;top:144.3px;font-size:11.45px;line-height:14px;color:#000">Education and Income in Toronto</div><svg width="700" height="458" viewBox="0 0 700 458" style="left:0;top:0"><clipPath id="mc"><polygon points="268.9,210.2 286.4,204.9 317.0,195.7 352.0,185.3 387.0,174.6 422.0,163.7 452.0,154.0 483.1,143.9 487.7,154.9 493.8,170.1 499.9,175.5 501.5,178.6 508.3,182.4 504.5,187.0 498.4,196.1 497.6,198.0 488.4,206.5 477.7,211.8 467.8,219.4 462.4,228.6 457.8,235.5 451.7,240.8 444.9,247.0 438.7,253.8 433.4,260.7 430.3,265.0 422.5,266.3 416.4,270.8 413.6,277.0 414.4,283.0 412.6,289.0 409.8,292.6 406.8,296.0 403.8,297.8 405.2,294.0 407.6,290.2 408.6,286.6 406.6,285.6 404.0,289.6 402.0,293.6 399.0,297.0 393.0,298.5 386.0,297.5 381.0,294.0 376.7,289.2 366.0,286.1 356.8,283.8 349.2,283.1 344.6,286.1 343.0,292.2 342.2,295.8 336.1,303.5 325.4,311.9 319.3,311.1 312.4,316.5 307.9,310.4 306.3,303.5 301.0,298.9 301.7,291.3 294.1,286.7 293.3,282.9 283.4,276.0 287.0,268.0 291.0,261.5 285.7,250.0 281.9,242.3 276.5,229.3"/></clipPath><g clip-path="url(#mc)"><polygon points="268.9,210.2 286.4,204.9 317.0,195.7 352.0,185.3 387.0,174.6 422.0,163.7 452.0,154.0 483.1,143.9 487.7,154.9 493.8,170.1 499.9,175.5 501.5,178.6 508.3,182.4 504.5,187.0 498.4,196.1 497.6,198.0 488.4,206.5 477.7,211.8 467.8,219.4 462.4,228.6 457.8,235.5 451.7,240.8 444.9,247.0 438.7,253.8 433.4,260.7 430.3,265.0 422.5,266.3 416.4,270.8 413.6,277.0 414.4,283.0 412.6,289.0 409.8,292.6 406.8,296.0 403.8,297.8 405.2,294.0 407.6,290.2 408.6,286.6 406.6,285.6 404.0,289.6 402.0,293.6 399.0,297.0 393.0,298.5 386.0,297.5 381.0,294.0 376.7,289.2 366.0,286.1 356.8,283.8 349.2,283.1 344.6,286.1 343.0,292.2 342.2,295.8 336.1,303.5 325.4,311.9 319.3,311.1 312.4,316.5 307.9,310.4 306.3,303.5 301.0,298.9 301.7,291.3 294.1,286.7 293.3,282.9 283.4,276.0 287.0,268.0 291.0,261.5 285.7,250.0 281.9,242.3 276.5,229.3" fill="#fbe4c2"/><polygon points="268.9,210.2 286.4,204.9 287.2,211.0 290.3,216.3 292.6,223.2 297.9,224.7 299.4,232.4 303.3,233.9 307.8,235.4 304.8,238.5 301.0,246.1 299.4,250.0 296.4,258.4 291.0,261.5 285.7,250.0 281.9,242.3 276.5,229.3" fill="#efa595" stroke="#a39a94" stroke-width=".5"/><polygon points="297.9,220.4 300.2,219.8 303.0,225.0 305.5,230.8 303.3,233.9 299.4,232.4 298.7,226.3" fill="#c23c58" stroke="#a39a94" stroke-width=".5"/><polygon points="305.5,225.0 307.8,223.2 314.0,224.0 315.5,229.3 311.7,233.9 307.8,234.7 305.5,230.8 303.0,225.0" fill="#e2686a" stroke="#a39a94" stroke-width=".5"/><polygon points="319.3,220.9 329.2,219.4 333.8,215.6 339.9,211.0 343.0,207.9 348.0,207.4 353.5,212.7 352.0,221.1 342.0,227.2 335.3,229.3 329.2,230.8 320.1,229.3" fill="#efa595" stroke="#a39a94" stroke-width=".5"/><polygon points="316.2,237.0 319.3,238.5 323.1,237.0 329.2,237.7 330.8,243.1 329.2,246.1 326.2,245.4 323.1,243.1 318.5,241.5" fill="#e2686a" stroke="#a39a94" stroke-width=".5"/><polygon points="317.8,241.5 323.1,243.1 326.2,245.4 327.7,252.2 320.1,253.0 317.8,247.6" fill="#efa595" stroke="#a39a94" stroke-width=".5"/><polygon points="330.8,237.7 346.0,235.4 352.0,236.2 352.0,255.0 330.8,255.0 329.2,246.1" fill="#efa595" stroke="#a39a94" stroke-width=".5"/><polygon points="333.5,243.8 341.8,243.1 342.5,249.2 334.4,250.1" fill="#fbe4c2" stroke="#a39a94" stroke-width=".5"/><polygon points="383.3,188.3 393.2,186.0 394.7,184.4 404.6,181.4 405.4,179.1 409.2,179.1 410.8,192.9 406.2,198.2 395.5,196.7 394.0,200.5 384.8,200.5" fill="#efa595" stroke="#a39a94" stroke-width=".5"/><polygon points="361.9,201.3 371.0,199.0 374.1,205.8 372.6,212.0 364.9,218.1 361.9,215.0" fill="#efa595" stroke="#a39a94" stroke-width=".5"/><polygon points="376.4,214.2 386.3,212.0 392.4,221.1 401.6,230.0 376.4,230.0" fill="#efa595" stroke="#a39a94" stroke-width=".5"/><polygon points="403.1,204.3 415.3,198.2 424.5,197.4 432.0,204.3 432.0,230.0 421.5,230.0 410.8,218.1 403.1,210.4" fill="#efa595" stroke="#a39a94" stroke-width=".5"/><polygon points="413.8,216.5 421.5,217.3 423.0,230.0 415.3,225.7 410.8,218.8" fill="#e2686a" stroke="#a39a94" stroke-width=".5"/><polygon points="356.5,224.2 363.4,222.6 364.9,230.0 356.5,230.0" fill="#efa595" stroke="#a39a94" stroke-width=".5"/><polygon points="450.4,172.1 460.9,166.9 467.6,171.0 471.5,182.7 460.9,185.5 459.3,197.9 452.1,199.3 450.4,185.5" fill="#efa595" stroke="#a39a94" stroke-width=".5"/><polygon points="445.7,191.5 458.7,187.0 461.0,196.1 467.8,200.7 467.8,205.0 446.4,205.0" fill="#efa595" stroke="#a39a94" stroke-width=".5"/><polygon points="422.0,196.1 426.6,195.4 427.3,205.0 422.0,205.0" fill="#efa595" stroke="#a39a94" stroke-width=".5"/><polygon points="412.0,195.0 470.8,195.0 469.3,204.2 473.1,206.5 470.1,207.2 465.5,212.6 462.4,211.0 457.1,217.6 450.2,222.5 446.4,227.9 446.4,231.7 440.3,240.8 434.9,243.9 433.4,248.5 427.3,245.4 421.2,245.4 412.0,243.9" fill="#efa595" stroke="#a39a94" stroke-width=".5"/><polygon points="428.0,197.3 436.4,195.0 440.3,214.9 431.9,216.4" fill="#fbe4c2" stroke="#a39a94" stroke-width=".5"/><polygon points="438.7,198.1 447.9,195.0 452.5,208.8 447.9,214.9 441.0,214.9" fill="#fbe4c2" stroke="#a39a94" stroke-width=".5"/><polygon points="424.2,227.9 434.9,224.8 436.4,233.2 443.3,232.4 439.5,240.8 428.8,242.4 426.5,234.7" fill="#fbe4c2" stroke="#a39a94" stroke-width=".5"/><polygon points="461.0,183.9 470.9,180.8 472.4,182.4 474.0,188.5 469.4,199.2 467.8,200.7 461.0,196.1 458.7,187.0" fill="#fbe4c2" stroke="#a39a94" stroke-width=".5"/><polygon points="470.4,184.1 480.9,179.4 492.0,182.7 482.3,192.4 474.0,193.8 468.4,189.6" fill="#e2686a" stroke="#a39a94" stroke-width=".5"/><polygon points="492.0,182.7 502.5,179.4 507.2,185.5 500.3,196.0 492.0,204.3 482.3,192.4" fill="#ec8f82" stroke="#a39a94" stroke-width=".5"/><polygon points="468.4,202.6 474.0,193.8 482.3,192.4 492.0,204.3 480.9,210.4 471.2,216.0 465.7,221.5 460.1,210.4" fill="#e2686a" stroke="#a39a94" stroke-width=".5"/><polygon points="465.5,212.6 470.1,207.2 483.8,207.2 488.4,206.5 477.7,211.8 467.8,219.4 465.5,221.0" fill="#efa595" stroke="#a39a94" stroke-width=".5"/><polygon points="457.1,217.6 462.4,211.0 465.5,212.6 465.5,221.0 462.4,225.6" fill="#e2686a" stroke="#a39a94" stroke-width=".5"/><polygon points="446.4,227.9 450.2,222.5 457.1,217.6 462.4,225.6 459.4,231.7 455.5,237.0 450.2,239.3 448.7,233.2" fill="#8a1a4c" stroke="#a39a94" stroke-width=".5"/><polygon points="440.3,240.8 446.4,231.7 448.7,233.2 450.2,239.3 444.9,247.0 438.7,253.8 433.4,248.5 434.9,243.9" fill="#e2686a" stroke="#a39a94" stroke-width=".5"/><polygon points="412.0,243.9 421.2,245.4 428.8,242.4 433.4,248.5 438.7,253.8 430.3,265.0 412.0,265.0" fill="#e2686a" stroke="#a39a94" stroke-width=".5"/><polygon points="412.0,234.7 421.2,230.1 426.5,234.7 428.8,242.4 421.2,245.4 412.0,243.9" fill="#c23c58" stroke="#a39a94" stroke-width=".5"/><polygon points="340.0,225.0 430.0,225.0 430.0,263.2 416.4,270.8 411.8,283.1 404.2,292.2 401.1,289.2 399.6,295.0 376.7,295.0 366.0,286.1 356.8,283.8 349.2,283.1 344.6,286.1 340.0,286.1" fill="#efa595" stroke="#a39a94" stroke-width=".5"/><polygon points="340.0,225.0 349.2,225.0 348.4,234.2 340.0,236.5" fill="#fbe4c2" stroke="#a39a94" stroke-width=".5"/><polygon points="362.9,225.0 385.8,225.0 384.3,231.1 370.6,232.6 364.4,231.1" fill="#fbe4c2" stroke="#a39a94" stroke-width=".5"/><polygon points="348.4,240.3 359.9,238.8 360.6,243.3 349.2,245.6" fill="#fbe4c2" stroke="#a39a94" stroke-width=".5"/><polygon points="382.0,246.4 392.0,247.6 393.8,256.3 384.6,257.4" fill="#fbe4c2" stroke="#a39a94" stroke-width=".5"/><polygon points="340.0,251.0 346.9,249.4 349.2,255.6 340.0,257.9" fill="#fbe4c2" stroke="#a39a94" stroke-width=".5"/><polygon points="340.0,273.9 349.2,275.4 347.6,283.1 340.0,284.6" fill="#fbe4c2" stroke="#a39a94" stroke-width=".5"/><polygon points="401.1,228.1 411.8,226.5 413.3,234.2 402.6,235.7" fill="#fbe4c2" stroke="#a39a94" stroke-width=".5"/><polygon points="349.2,245.6 362.9,242.6 364.4,255.6 355.3,258.9 349.5,254.0" fill="#e2686a" stroke="#a39a94" stroke-width=".5"/><polygon points="355.3,258.9 370.6,256.3 375.4,270.8 367.5,277.0 356.8,275.4" fill="#e2686a" stroke="#a39a94" stroke-width=".5"/><polygon points="340.0,257.9 349.2,255.6 355.3,258.9 356.8,275.4 349.2,275.4 340.0,273.9" fill="#e2686a" stroke="#a39a94" stroke-width=".5"/><polygon points="398.1,241.8 411.8,240.3 413.3,261.7 399.6,264.7 395.0,255.6" fill="#e2686a" stroke="#a39a94" stroke-width=".5"/><polygon points="375.1,275.4 385.8,273.9 387.4,280.0 376.7,281.5" fill="#e2686a" stroke="#a39a94" stroke-width=".5"/><polygon points="413.3,234.2 430.0,231.1 430.0,263.2 422.5,266.3 416.4,270.8 413.3,261.7 411.8,247.9" fill="#e2686a" stroke="#a39a94" stroke-width=".5"/><polygon points="413.3,234.2 425.6,232.6 427.9,249.4 419.5,251.0 413.3,251.7 411.8,247.9" fill="#c23c58" stroke="#a39a94" stroke-width=".5"/><polygon points="399.6,264.7 407.2,263.2 413.3,261.7 416.4,270.8 413.3,277.0 411.8,283.1 407.2,286.1 401.1,286.1 399.6,283.1" fill="#c23c58" stroke="#a39a94" stroke-width=".5"/><polygon points="413.3,251.7 419.5,251.0 430.0,249.4 430.0,263.2 421.0,265.0 416.4,270.8 413.3,261.7" fill="#c23c58" stroke="#a39a94" stroke-width=".5"/><polygon points="414.9,234.5 423.3,233.6 424.0,243.3 415.6,244.6" fill="#a82c52" stroke="#a39a94" stroke-width=".5"/><polygon points="413.6,277.0 414.4,283.0 412.6,289.0 409.8,292.6 406.8,296.0 403.8,297.8 405.2,294.0 407.6,290.2 408.6,286.6 408.0,280.0" fill="#c23c58" stroke="#a39a94" stroke-width=".5"/><polygon points="304.8,259.2 315.5,256.1 317.0,265.3 307.9,268.3" fill="#ec8f82" stroke="#a39a94" stroke-width=".5"/><polygon points="319.3,250.0 328.5,254.6 342.2,253.1 343.8,259.2 339.2,265.3 327.0,264.5 320.8,259.2 315.5,256.1" fill="#efa595" stroke="#a39a94" stroke-width=".5"/><polygon points="295.6,272.9 301.7,272.2 304.0,282.1 297.9,279.0" fill="#e2686a" stroke="#a39a94" stroke-width=".5"/><polygon points="318.5,295.8 336.1,289.7 342.2,295.8 336.1,303.5 333.8,308.1 331.5,298.1 320.8,305.0" fill="#efa595" stroke="#a39a94" stroke-width=".5"/><polygon points="306.3,300.4 318.5,295.8 320.8,305.0 312.4,311.1 307.9,310.4" fill="#e2686a" stroke="#a39a94" stroke-width=".5"/><polygon points="320.8,305.0 331.5,298.1 333.8,308.1 325.4,311.9 321.6,310.4" fill="#e2686a" stroke="#a39a94" stroke-width=".5"/><polygon points="312.4,311.1 318.5,306.5 320.8,310.4 313.2,316.5" fill="#c23c58" stroke="#a39a94" stroke-width=".5"/><polygon points="342.2,256.1 365.0,250.0 365.0,265.3 354.5,271.4 342.2,269.9" fill="#e2686a" stroke="#a39a94" stroke-width=".5"/><polyline points="286.4,204.6 287.2,211.0 290.3,216.3 292.6,223.2 297.9,224.7" fill="none" stroke="#a39a94" stroke-width=".5"/><polyline points="294.9,201.8 293.3,207.9 297.9,213.3 318.5,210.2 317.0,198.0" fill="none" stroke="#a39a94" stroke-width=".5"/><polyline points="318.5,210.2 319.3,220.9" fill="none" stroke="#a39a94" stroke-width=".5"/><polyline points="329.2,193.4 327.7,203.3 333.8,215.6" fill="none" stroke="#a39a94" stroke-width=".5"/><polyline points="346.8,188.1 347.6,198.8 352.0,200.3" fill="none" stroke="#a39a94" stroke-width=".5"/><polyline points="295.6,214.0 297.9,220.4" fill="none" stroke="#a39a94" stroke-width=".5"/><polyline points="307.8,223.2 310.9,215.6 314.7,217.9 314.0,224.0" fill="none" stroke="#a39a94" stroke-width=".5"/><polyline points="330.8,230.8 345.3,228.5 346.0,235.4 331.5,237.7 330.8,230.8" fill="none" stroke="#a39a94" stroke-width=".5"/><polyline points="338.4,229.8 338.9,236.6" fill="none" stroke="#a39a94" stroke-width=".5"/><polyline points="307.8,235.4 304.8,238.5 301.0,246.1 297.9,255.0" fill="none" stroke="#a39a94" stroke-width=".5"/><polyline points="316.2,237.0 312.4,243.1 314.0,255.0" fill="none" stroke="#a39a94" stroke-width=".5"/><polyline points="357.3,184.4 358.8,195.9 371.8,192.9 370.3,181.4" fill="none" stroke="#a39a94" stroke-width=".5"/><polyline points="370.3,181.4 371.8,192.9 383.3,189.8 381.0,178.3" fill="none" stroke="#a39a94" stroke-width=".5"/><polyline points="381.0,178.3 383.3,188.3" fill="none" stroke="#a39a94" stroke-width=".5"/><polyline points="392.4,174.5 393.2,186.0" fill="none" stroke="#a39a94" stroke-width=".5"/><polyline points="406.2,170.7 405.4,179.1" fill="none" stroke="#a39a94" stroke-width=".5"/><polyline points="421.5,165.3 423.0,175.3 432.0,173.8" fill="none" stroke="#a39a94" stroke-width=".5"/><polyline points="409.2,179.1 423.0,175.3 425.3,184.4 415.3,190.6 410.8,192.9" fill="none" stroke="#a39a94" stroke-width=".5"/><polyline points="346.6,186.7 348.1,196.7 358.8,195.9" fill="none" stroke="#a39a94" stroke-width=".5"/><polyline points="348.1,196.7 351.2,204.3 361.9,201.3" fill="none" stroke="#a39a94" stroke-width=".5"/><polyline points="374.1,205.8 380.2,203.5 394.0,200.5" fill="none" stroke="#a39a94" stroke-width=".5"/><polyline points="376.4,214.2 374.9,208.9 380.2,203.5" fill="none" stroke="#a39a94" stroke-width=".5"/><polyline points="386.3,212.0 395.5,208.9 403.1,210.4" fill="none" stroke="#a39a94" stroke-width=".5"/><polyline points="353.5,212.7 361.9,215.0 364.9,218.1 363.4,222.6" fill="none" stroke="#a39a94" stroke-width=".5"/><polyline points="395.5,196.7 401.6,205.8 403.1,210.4" fill="none" stroke="#a39a94" stroke-width=".5"/><polyline points="447.2,156.4 450.3,171.7" fill="none" stroke="#a39a94" stroke-width=".5"/><polyline points="428.9,170.9 440.3,167.1 442.6,170.9 447.2,170.1" fill="none" stroke="#a39a94" stroke-width=".5"/><polyline points="428.9,170.9 430.4,179.3 435.8,180.8 441.9,178.5 450.3,179.3" fill="none" stroke="#a39a94" stroke-width=".5"/><polyline points="422.0,180.8 428.1,182.4 430.4,179.3" fill="none" stroke="#a39a94" stroke-width=".5"/><polyline points="428.1,182.4 429.6,194.6 445.7,191.5" fill="none" stroke="#a39a94" stroke-width=".5"/><polyline points="436.5,193.8 438.0,205.0" fill="none" stroke="#a39a94" stroke-width=".5"/><polyline points="467.8,170.9 470.9,180.8 472.4,182.4" fill="none" stroke="#a39a94" stroke-width=".5"/><polyline points="495.3,180.1 499.9,175.5" fill="none" stroke="#a39a94" stroke-width=".5"/><polyline points="412.0,217.9 419.6,215.6 428.0,197.3" fill="none" stroke="#a39a94" stroke-width=".5"/><polyline points="419.6,215.6 424.2,227.9" fill="none" stroke="#a39a94" stroke-width=".5"/><polyline points="431.9,216.4 434.9,224.8" fill="none" stroke="#a39a94" stroke-width=".5"/><polyline points="440.3,214.9 441.0,219.4 446.4,227.9" fill="none" stroke="#a39a94" stroke-width=".5"/><polyline points="434.9,224.8 441.0,219.4" fill="none" stroke="#a39a94" stroke-width=".5"/><polyline points="447.9,214.9 457.1,217.6" fill="none" stroke="#a39a94" stroke-width=".5"/><polyline points="452.5,208.8 462.4,211.0" fill="none" stroke="#a39a94" stroke-width=".5"/><polyline points="470.8,195.0 460.9,198.1 452.5,208.8" fill="none" stroke="#a39a94" stroke-width=".5"/><polyline points="299.4,250.0 296.4,258.4 304.8,259.2" fill="none" stroke="#a39a94" stroke-width=".5"/><polyline points="304.8,259.2 302.5,269.9 295.6,272.9" fill="none" stroke="#a39a94" stroke-width=".5"/><polyline points="302.5,269.9 307.9,268.3 317.0,265.3 320.8,274.4 325.4,292.0 318.5,295.8" fill="none" stroke="#a39a94" stroke-width=".5"/><polyline points="320.8,274.4 327.0,264.5" fill="none" stroke="#a39a94" stroke-width=".5"/><polyline points="325.4,278.3 336.1,276.0 342.2,282.1 336.1,289.7" fill="none" stroke="#a39a94" stroke-width=".5"/><polyline points="336.1,276.0 339.2,265.3" fill="none" stroke="#a39a94" stroke-width=".5"/><polyline points="342.2,282.1 351.4,285.1" fill="none" stroke="#a39a94" stroke-width=".5"/><polyline points="304.0,282.1 301.7,291.3" fill="none" stroke="#a39a94" stroke-width=".5"/><polyline points="290.3,278.3 295.6,272.9" fill="none" stroke="#a39a94" stroke-width=".5"/><polyline points="370.6,232.6 371.3,241.8 362.9,242.6" fill="none" stroke="#a39a94" stroke-width=".5"/><polyline points="384.3,231.1 385.8,241.8 371.3,241.8" fill="none" stroke="#a39a94" stroke-width=".5"/><polyline points="385.8,241.8 398.1,241.8" fill="none" stroke="#a39a94" stroke-width=".5"/><polyline points="370.6,256.3 384.3,257.4 385.8,273.9" fill="none" stroke="#a39a94" stroke-width=".5"/><polyline points="393.8,256.3 395.0,255.6" fill="none" stroke="#a39a94" stroke-width=".5"/><polyline points="375.4,270.8 385.8,273.9 398.1,275.4 399.6,264.7" fill="none" stroke="#a39a94" stroke-width=".5"/><polyline points="349.2,225.0 352.2,239.5" fill="none" stroke="#a39a94" stroke-width=".5"/><polyline points="359.9,238.8 362.9,225.0" fill="none" stroke="#a39a94" stroke-width=".5"/></g><polygon points="268.9,210.2 286.4,204.9 317.0,195.7 352.0,185.3 387.0,174.6 422.0,163.7 452.0,154.0 483.1,143.9 487.7,154.9 493.8,170.1 499.9,175.5 501.5,178.6 508.3,182.4 504.5,187.0 498.4,196.1 497.6,198.0 488.4,206.5 477.7,211.8 467.8,219.4 462.4,228.6 457.8,235.5 451.7,240.8 444.9,247.0 438.7,253.8 433.4,260.7 430.3,265.0 422.5,266.3 416.4,270.8 413.6,277.0 414.4,283.0 412.6,289.0 409.8,292.6 406.8,296.0 403.8,297.8 405.2,294.0 407.6,290.2 408.6,286.6 406.6,285.6 404.0,289.6 402.0,293.6 399.0,297.0 393.0,298.5 386.0,297.5 381.0,294.0 376.7,289.2 366.0,286.1 356.8,283.8 349.2,283.1 344.6,286.1 343.0,292.2 342.2,295.8 336.1,303.5 325.4,311.9 319.3,311.1 312.4,316.5 307.9,310.4 306.3,303.5 301.0,298.9 301.7,291.3 294.1,286.7 293.3,282.9 283.4,276.0 287.0,268.0 291.0,261.5 285.7,250.0 281.9,242.3 276.5,229.3" fill="none" stroke="#9a9a9a" stroke-width=".6"/><circle cx="303.3" cy="217.9" r="1.70" fill="#ddd3f3" stroke="#d4c4ea" stroke-width=".3"/><circle cx="303.3" cy="217.9" r="0.75" fill="#7238b2"/><circle cx="319.3" cy="230.8" r="1.70" fill="#ddd3f3" stroke="#d4c4ea" stroke-width=".3"/><circle cx="319.3" cy="230.8" r="0.75" fill="#7238b2"/><circle cx="435.4" cy="165.3" r="1.70" fill="#ddd3f3" stroke="#d4c4ea" stroke-width=".3"/><circle cx="435.4" cy="165.3" r="0.75" fill="#7238b2"/><circle cx="433.5" cy="204.1" r="1.70" fill="#ddd3f3" stroke="#d4c4ea" stroke-width=".3"/><circle cx="433.5" cy="204.1" r="0.75" fill="#7238b2"/><circle cx="443.4" cy="203.5" r="1.70" fill="#ddd3f3" stroke="#d4c4ea" stroke-width=".3"/><circle cx="443.4" cy="203.5" r="0.75" fill="#7238b2"/><circle cx="449.1" cy="216.4" r="1.70" fill="#ddd3f3" stroke="#d4c4ea" stroke-width=".3"/><circle cx="449.1" cy="216.4" r="0.75" fill="#7238b2"/><circle cx="306.8" cy="204.9" r="1.70" fill="#ddd3f3" stroke="#d4c4ea" stroke-width=".3"/><circle cx="306.8" cy="204.9" r="0.75" fill="#7238b2"/><circle cx="322.4" cy="201.0" r="1.70" fill="#ddd3f3" stroke="#d4c4ea" stroke-width=".3"/><circle cx="322.4" cy="201.0" r="0.75" fill="#7238b2"/><circle cx="292.6" cy="212.2" r="1.70" fill="#ddd3f3" stroke="#d4c4ea" stroke-width=".3"/><circle cx="292.6" cy="212.2" r="0.75" fill="#7238b2"/><circle cx="313.2" cy="214.0" r="1.70" fill="#ddd3f3" stroke="#d4c4ea" stroke-width=".3"/><circle cx="313.2" cy="214.0" r="0.75" fill="#7238b2"/><circle cx="326.2" cy="213.3" r="1.70" fill="#ddd3f3" stroke="#d4c4ea" stroke-width=".3"/><circle cx="326.2" cy="213.3" r="0.75" fill="#7238b2"/><circle cx="336.6" cy="221.2" r="1.70" fill="#ddd3f3" stroke="#d4c4ea" stroke-width=".3"/><circle cx="336.6" cy="221.2" r="0.75" fill="#7238b2"/><circle cx="333.1" cy="234.7" r="1.70" fill="#ddd3f3" stroke="#d4c4ea" stroke-width=".3"/><circle cx="333.1" cy="234.7" r="0.75" fill="#7238b2"/><circle cx="332.3" cy="249.2" r="1.70" fill="#ddd3f3" stroke="#d4c4ea" stroke-width=".3"/><circle cx="332.3" cy="249.2" r="0.75" fill="#7238b2"/><circle cx="350.6" cy="233.1" r="1.70" fill="#ddd3f3" stroke="#d4c4ea" stroke-width=".3"/><circle cx="350.6" cy="233.1" r="0.75" fill="#7238b2"/><circle cx="350.7" cy="258.3" r="1.70" fill="#ddd3f3" stroke="#d4c4ea" stroke-width=".3"/><circle cx="350.7" cy="258.3" r="0.75" fill="#7238b2"/><circle cx="335.4" cy="257.9" r="1.70" fill="#ddd3f3" stroke="#d4c4ea" stroke-width=".3"/><circle cx="335.4" cy="257.9" r="0.75" fill="#7238b2"/><circle cx="417.6" cy="181.1" r="1.70" fill="#ddd3f3" stroke="#d4c4ea" stroke-width=".3"/><circle cx="417.6" cy="181.1" r="0.78" fill="#7238b2"/><circle cx="439.6" cy="175.0" r="1.70" fill="#ddd3f3" stroke="#d4c4ea" stroke-width=".3"/><circle cx="439.6" cy="175.0" r="0.78" fill="#7238b2"/><circle cx="440.0" cy="185.4" r="1.70" fill="#ddd3f3" stroke="#d4c4ea" stroke-width=".3"/><circle cx="440.0" cy="185.4" r="0.78" fill="#7238b2"/><circle cx="476.2" cy="165.1" r="1.70" fill="#ddd3f3" stroke="#d4c4ea" stroke-width=".3"/><circle cx="476.2" cy="165.1" r="0.78" fill="#7238b2"/><circle cx="436.4" cy="219.4" r="1.70" fill="#ddd3f3" stroke="#d4c4ea" stroke-width=".3"/><circle cx="436.4" cy="219.4" r="0.78" fill="#7238b2"/><circle cx="433.4" cy="243.9" r="1.70" fill="#ddd3f3" stroke="#d4c4ea" stroke-width=".3"/><circle cx="433.4" cy="243.9" r="0.78" fill="#7238b2"/><circle cx="337.3" cy="200.3" r="1.70" fill="#ddd3f3" stroke="#d4c4ea" stroke-width=".3"/><circle cx="337.3" cy="200.3" r="0.78" fill="#7238b2"/><circle cx="309.8" cy="229.0" r="1.70" fill="#ddd3f3" stroke="#d4c4ea" stroke-width=".3"/><circle cx="309.8" cy="229.0" r="0.78" fill="#7238b2"/><circle cx="341.2" cy="232.4" r="1.70" fill="#ddd3f3" stroke="#d4c4ea" stroke-width=".3"/><circle cx="341.2" cy="232.4" r="0.78" fill="#7238b2"/><circle cx="310.9" cy="242.8" r="1.70" fill="#ddd3f3" stroke="#d4c4ea" stroke-width=".3"/><circle cx="310.9" cy="242.8" r="0.78" fill="#7238b2"/><circle cx="338.4" cy="241.5" r="1.70" fill="#ddd3f3" stroke="#d4c4ea" stroke-width=".3"/><circle cx="338.4" cy="241.5" r="0.78" fill="#7238b2"/><circle cx="341.5" cy="246.4" r="1.70" fill="#ddd3f3" stroke="#d4c4ea" stroke-width=".3"/><circle cx="341.5" cy="246.4" r="0.78" fill="#7238b2"/><circle cx="307.8" cy="251.9" r="1.70" fill="#ddd3f3" stroke="#d4c4ea" stroke-width=".3"/><circle cx="307.8" cy="251.9" r="0.78" fill="#7238b2"/><circle cx="352.2" cy="232.3" r="1.70" fill="#ddd3f3" stroke="#d4c4ea" stroke-width=".3"/><circle cx="352.2" cy="232.3" r="0.78" fill="#7238b2"/><circle cx="353.0" cy="249.4" r="1.70" fill="#ddd3f3" stroke="#d4c4ea" stroke-width=".3"/><circle cx="353.0" cy="249.4" r="0.78" fill="#7238b2"/><circle cx="301.0" cy="277.2" r="1.70" fill="#ddd3f3" stroke="#d4c4ea" stroke-width=".3"/><circle cx="301.0" cy="277.2" r="0.78" fill="#7238b2"/><circle cx="414.3" cy="170.4" r="1.87" fill="#ddd3f3" stroke="#d4c4ea" stroke-width=".3"/><circle cx="414.3" cy="170.4" r="0.91" fill="#7238b2"/><circle cx="354.2" cy="191.8" r="1.87" fill="#ddd3f3" stroke="#d4c4ea" stroke-width=".3"/><circle cx="354.2" cy="191.8" r="0.91" fill="#7238b2"/><circle cx="424.5" cy="211.2" r="1.87" fill="#ddd3f3" stroke="#d4c4ea" stroke-width=".3"/><circle cx="424.5" cy="211.2" r="0.91" fill="#7238b2"/><circle cx="466.6" cy="189.7" r="1.87" fill="#ddd3f3" stroke="#d4c4ea" stroke-width=".3"/><circle cx="466.6" cy="189.7" r="0.91" fill="#7238b2"/><circle cx="442.6" cy="225.6" r="1.87" fill="#ddd3f3" stroke="#d4c4ea" stroke-width=".3"/><circle cx="442.6" cy="225.6" r="0.91" fill="#7238b2"/><circle cx="472.1" cy="210.3" r="1.87" fill="#ddd3f3" stroke="#d4c4ea" stroke-width=".3"/><circle cx="472.1" cy="210.3" r="0.91" fill="#7238b2"/><circle cx="432.6" cy="233.2" r="1.87" fill="#ddd3f3" stroke="#d4c4ea" stroke-width=".3"/><circle cx="432.6" cy="233.2" r="0.91" fill="#7238b2"/><circle cx="440.0" cy="245.1" r="1.87" fill="#ddd3f3" stroke="#d4c4ea" stroke-width=".3"/><circle cx="440.0" cy="245.1" r="0.91" fill="#7238b2"/><circle cx="302.2" cy="227.0" r="1.87" fill="#ddd3f3" stroke="#d4c4ea" stroke-width=".3"/><circle cx="302.2" cy="227.0" r="0.91" fill="#7238b2"/><circle cx="288.7" cy="231.6" r="1.87" fill="#ddd3f3" stroke="#d4c4ea" stroke-width=".3"/><circle cx="288.7" cy="231.6" r="0.91" fill="#7238b2"/><circle cx="325.1" cy="240.5" r="1.87" fill="#ddd3f3" stroke="#d4c4ea" stroke-width=".3"/><circle cx="325.1" cy="240.5" r="0.91" fill="#7238b2"/><circle cx="322.1" cy="246.9" r="1.87" fill="#ddd3f3" stroke="#d4c4ea" stroke-width=".3"/><circle cx="322.1" cy="246.9" r="0.91" fill="#7238b2"/><circle cx="345.7" cy="251.0" r="1.87" fill="#ddd3f3" stroke="#d4c4ea" stroke-width=".3"/><circle cx="345.7" cy="251.0" r="0.91" fill="#7238b2"/><circle cx="409.5" cy="231.9" r="1.87" fill="#ddd3f3" stroke="#d4c4ea" stroke-width=".3"/><circle cx="409.5" cy="231.9" r="0.91" fill="#7238b2"/><circle cx="354.1" cy="242.6" r="1.87" fill="#ddd3f3" stroke="#d4c4ea" stroke-width=".3"/><circle cx="354.1" cy="242.6" r="0.91" fill="#7238b2"/><circle cx="295.6" cy="269.1" r="1.87" fill="#ddd3f3" stroke="#d4c4ea" stroke-width=".3"/><circle cx="295.6" cy="269.1" r="0.91" fill="#7238b2"/><circle cx="313.2" cy="302.4" r="1.87" fill="#ddd3f3" stroke="#d4c4ea" stroke-width=".3"/><circle cx="313.2" cy="302.4" r="0.91" fill="#7238b2"/><circle cx="352.7" cy="201.0" r="2.14" fill="#fff" stroke="#d4c4ea" stroke-width=".3"/><circle cx="352.7" cy="201.0" r="1.04" fill="#7238b2"/><circle cx="422.5" cy="191.3" r="2.14" fill="#fff" stroke="#d4c4ea" stroke-width=".3"/><circle cx="422.5" cy="191.3" r="1.04" fill="#7238b2"/><circle cx="361.1" cy="228.5" r="2.14" fill="#fff" stroke="#d4c4ea" stroke-width=".3"/><circle cx="361.1" cy="228.5" r="1.04" fill="#7238b2"/><circle cx="374.9" cy="228.8" r="2.14" fill="#fff" stroke="#d4c4ea" stroke-width=".3"/><circle cx="374.9" cy="228.8" r="1.04" fill="#7238b2"/><circle cx="459.9" cy="176.3" r="2.14" fill="#fff" stroke="#d4c4ea" stroke-width=".3"/><circle cx="459.9" cy="176.3" r="1.04" fill="#7238b2"/><circle cx="480.5" cy="199.2" r="2.14" fill="#fff" stroke="#d4c4ea" stroke-width=".3"/><circle cx="480.5" cy="199.2" r="1.04" fill="#7238b2"/><circle cx="456.8" cy="199.9" r="2.14" fill="#fff" stroke="#d4c4ea" stroke-width=".3"/><circle cx="456.8" cy="199.9" r="1.04" fill="#7238b2"/><circle cx="462.1" cy="217.6" r="2.14" fill="#fff" stroke="#d4c4ea" stroke-width=".3"/><circle cx="462.1" cy="217.6" r="1.04" fill="#7238b2"/><circle cx="412.0" cy="259.2" r="2.14" fill="#fff" stroke="#d4c4ea" stroke-width=".3"/><circle cx="412.0" cy="259.2" r="1.04" fill="#7238b2"/><circle cx="356.5" cy="256.3" r="2.14" fill="#fff" stroke="#d4c4ea" stroke-width=".3"/><circle cx="356.5" cy="256.3" r="1.04" fill="#7238b2"/><circle cx="340.0" cy="267.8" r="2.14" fill="#fff" stroke="#d4c4ea" stroke-width=".3"/><circle cx="340.0" cy="267.8" r="1.04" fill="#7238b2"/><circle cx="359.9" cy="281.8" r="2.14" fill="#fff" stroke="#d4c4ea" stroke-width=".3"/><circle cx="359.9" cy="281.8" r="1.04" fill="#7238b2"/><circle cx="298.7" cy="283.9" r="2.14" fill="#fff" stroke="#d4c4ea" stroke-width=".3"/><circle cx="298.7" cy="283.9" r="1.04" fill="#7238b2"/><circle cx="357.0" cy="215.3" r="2.41" fill="#fff" stroke="#d4c4ea" stroke-width=".3"/><circle cx="357.0" cy="215.3" r="1.17" fill="#7238b2"/><circle cx="417.2" cy="223.9" r="2.41" fill="#fff" stroke="#d4c4ea" stroke-width=".3"/><circle cx="417.2" cy="223.9" r="1.17" fill="#7238b2"/><circle cx="492.3" cy="189.7" r="2.41" fill="#fff" stroke="#d4c4ea" stroke-width=".3"/><circle cx="492.3" cy="189.7" r="1.17" fill="#7238b2"/><circle cx="453.3" cy="228.6" r="2.41" fill="#fff" stroke="#d4c4ea" stroke-width=".3"/><circle cx="453.3" cy="228.6" r="1.17" fill="#7238b2"/><circle cx="359.9" cy="249.1" r="2.41" fill="#fff" stroke="#d4c4ea" stroke-width=".3"/><circle cx="359.9" cy="249.1" r="1.17" fill="#7238b2"/><circle cx="410.0" cy="247.9" r="2.41" fill="#fff" stroke="#d4c4ea" stroke-width=".3"/><circle cx="410.0" cy="247.9" r="1.17" fill="#7238b2"/><circle cx="395.8" cy="267.8" r="2.41" fill="#fff" stroke="#d4c4ea" stroke-width=".3"/><circle cx="395.8" cy="267.8" r="1.17" fill="#7238b2"/><circle cx="364.1" cy="275.1" r="2.41" fill="#fff" stroke="#d4c4ea" stroke-width=".3"/><circle cx="364.1" cy="275.1" r="1.17" fill="#7238b2"/><circle cx="334.3" cy="269.1" r="2.41" fill="#fff" stroke="#d4c4ea" stroke-width=".3"/><circle cx="334.3" cy="269.1" r="1.17" fill="#7238b2"/><circle cx="327.7" cy="304.7" r="2.41" fill="#fff" stroke="#d4c4ea" stroke-width=".3"/><circle cx="327.7" cy="304.7" r="1.17" fill="#7238b2"/><circle cx="317.0" cy="310.1" r="2.41" fill="#fff" stroke="#d4c4ea" stroke-width=".3"/><circle cx="317.0" cy="310.1" r="1.17" fill="#7238b2"/><circle cx="398.8" cy="176.5" r="2.67" fill="#fff" stroke="#d4c4ea" stroke-width=".3"/><circle cx="398.8" cy="176.5" r="1.30" fill="#7238b2"/><circle cx="407.7" cy="187.2" r="2.67" fill="#fff" stroke="#d4c4ea" stroke-width=".3"/><circle cx="407.7" cy="187.2" r="1.30" fill="#7238b2"/><circle cx="480.1" cy="184.7" r="2.67" fill="#fff" stroke="#d4c4ea" stroke-width=".3"/><circle cx="480.1" cy="184.7" r="1.30" fill="#7238b2"/><circle cx="418.1" cy="237.8" r="2.67" fill="#fff" stroke="#d4c4ea" stroke-width=".3"/><circle cx="418.1" cy="237.8" r="1.30" fill="#7238b2"/><circle cx="418.9" cy="245.4" r="2.67" fill="#fff" stroke="#d4c4ea" stroke-width=".3"/><circle cx="418.9" cy="245.4" r="1.30" fill="#7238b2"/><circle cx="416.6" cy="256.9" r="2.67" fill="#fff" stroke="#d4c4ea" stroke-width=".3"/><circle cx="416.6" cy="256.9" r="1.30" fill="#7238b2"/><circle cx="401.4" cy="236.9" r="2.67" fill="#fff" stroke="#d4c4ea" stroke-width=".3"/><circle cx="401.4" cy="236.9" r="1.30" fill="#7238b2"/><circle cx="407.2" cy="244.1" r="2.67" fill="#fff" stroke="#d4c4ea" stroke-width=".3"/><circle cx="407.2" cy="244.1" r="1.30" fill="#7238b2"/><circle cx="379.4" cy="271.6" r="2.67" fill="#fff" stroke="#d4c4ea" stroke-width=".3"/><circle cx="379.4" cy="271.6" r="1.30" fill="#7238b2"/><circle cx="322.1" cy="260.7" r="2.67" fill="#fff" stroke="#d4c4ea" stroke-width=".3"/><circle cx="322.1" cy="260.7" r="1.30" fill="#7238b2"/><circle cx="331.5" cy="282.9" r="2.67" fill="#fff" stroke="#d4c4ea" stroke-width=".3"/><circle cx="331.5" cy="282.9" r="1.30" fill="#7238b2"/><circle cx="332.3" cy="295.4" r="2.67" fill="#fff" stroke="#d4c4ea" stroke-width=".3"/><circle cx="332.3" cy="295.4" r="1.30" fill="#7238b2"/><circle cx="425.8" cy="245.4" r="2.94" fill="#fff" stroke="#d4c4ea" stroke-width=".3"/><circle cx="425.8" cy="245.4" r="1.43" fill="#7238b2"/><circle cx="365.2" cy="247.6" r="2.94" fill="#fff" stroke="#d4c4ea" stroke-width=".3"/><circle cx="365.2" cy="247.6" r="1.43" fill="#7238b2"/><circle cx="398.5" cy="249.4" r="2.94" fill="#fff" stroke="#d4c4ea" stroke-width=".3"/><circle cx="398.5" cy="249.4" r="1.43" fill="#7238b2"/><circle cx="410.6" cy="252.5" r="2.94" fill="#fff" stroke="#d4c4ea" stroke-width=".3"/><circle cx="410.6" cy="252.5" r="1.43" fill="#7238b2"/><circle cx="366.7" cy="256.8" r="2.94" fill="#fff" stroke="#d4c4ea" stroke-width=".3"/><circle cx="366.7" cy="256.8" r="1.43" fill="#7238b2"/><circle cx="406.9" cy="257.1" r="2.94" fill="#fff" stroke="#d4c4ea" stroke-width=".3"/><circle cx="406.9" cy="257.1" r="1.43" fill="#7238b2"/><circle cx="360.3" cy="264.0" r="2.94" fill="#fff" stroke="#d4c4ea" stroke-width=".3"/><circle cx="360.3" cy="264.0" r="1.43" fill="#7238b2"/><circle cx="360.9" cy="270.1" r="2.94" fill="#fff" stroke="#d4c4ea" stroke-width=".3"/><circle cx="360.9" cy="270.1" r="1.43" fill="#7238b2"/><circle cx="371.3" cy="273.6" r="2.94" fill="#fff" stroke="#d4c4ea" stroke-width=".3"/><circle cx="371.3" cy="273.6" r="1.43" fill="#7238b2"/><circle cx="346.9" cy="276.2" r="2.94" fill="#fff" stroke="#d4c4ea" stroke-width=".3"/><circle cx="346.9" cy="276.2" r="1.43" fill="#7238b2"/><circle cx="358.6" cy="275.9" r="2.94" fill="#fff" stroke="#d4c4ea" stroke-width=".3"/><circle cx="358.6" cy="275.9" r="1.43" fill="#7238b2"/><circle cx="407.7" cy="273.9" r="2.94" fill="#fff" stroke="#d4c4ea" stroke-width=".3"/><circle cx="407.7" cy="273.9" r="1.43" fill="#7238b2"/><circle cx="311.7" cy="263.4" r="2.94" fill="#fff" stroke="#d4c4ea" stroke-width=".3"/><circle cx="311.7" cy="263.4" r="1.43" fill="#7238b2"/><circle cx="312.4" cy="283.9" r="2.94" fill="#fff" stroke="#d4c4ea" stroke-width=".3"/><circle cx="312.4" cy="283.9" r="1.43" fill="#7238b2"/><circle cx="364.2" cy="187.5" r="3.21" fill="#fff" stroke="#d4c4ea" stroke-width=".3"/><circle cx="364.2" cy="187.5" r="1.56" fill="#7238b2"/><circle cx="386.3" cy="180.6" r="3.21" fill="#fff" stroke="#d4c4ea" stroke-width=".3"/><circle cx="386.3" cy="180.6" r="1.56" fill="#7238b2"/><circle cx="410.0" cy="207.1" r="3.21" fill="#fff" stroke="#d4c4ea" stroke-width=".3"/><circle cx="410.0" cy="207.1" r="1.56" fill="#7238b2"/><circle cx="369.2" cy="221.9" r="3.21" fill="#fff" stroke="#d4c4ea" stroke-width=".3"/><circle cx="369.2" cy="221.9" r="1.56" fill="#7238b2"/><circle cx="424.2" cy="252.3" r="3.21" fill="#fff" stroke="#d4c4ea" stroke-width=".3"/><circle cx="424.2" cy="252.3" r="1.56" fill="#7238b2"/><circle cx="424.2" cy="260.4" r="3.21" fill="#fff" stroke="#d4c4ea" stroke-width=".3"/><circle cx="424.2" cy="260.4" r="1.56" fill="#7238b2"/><circle cx="365.2" cy="239.1" r="3.21" fill="#fff" stroke="#d4c4ea" stroke-width=".3"/><circle cx="365.2" cy="239.1" r="1.56" fill="#7238b2"/><circle cx="381.6" cy="239.1" r="3.21" fill="#fff" stroke="#d4c4ea" stroke-width=".3"/><circle cx="381.6" cy="239.1" r="1.56" fill="#7238b2"/><circle cx="385.8" cy="239.1" r="3.21" fill="#fff" stroke="#d4c4ea" stroke-width=".3"/><circle cx="385.8" cy="239.1" r="1.56" fill="#7238b2"/><circle cx="393.5" cy="239.5" r="3.21" fill="#fff" stroke="#d4c4ea" stroke-width=".3"/><circle cx="393.5" cy="239.5" r="1.56" fill="#7238b2"/><circle cx="389.4" cy="261.7" r="3.21" fill="#fff" stroke="#d4c4ea" stroke-width=".3"/><circle cx="389.4" cy="261.7" r="1.56" fill="#7238b2"/><circle cx="345.3" cy="262.4" r="3.21" fill="#fff" stroke="#d4c4ea" stroke-width=".3"/><circle cx="345.3" cy="262.4" r="1.56" fill="#7238b2"/><circle cx="393.2" cy="269.3" r="3.21" fill="#fff" stroke="#d4c4ea" stroke-width=".3"/><circle cx="393.2" cy="269.3" r="1.56" fill="#7238b2"/><circle cx="327.4" cy="271.4" r="3.21" fill="#fff" stroke="#d4c4ea" stroke-width=".3"/><circle cx="327.4" cy="271.4" r="1.56" fill="#7238b2"/><circle cx="399.3" cy="189.0" r="3.48" fill="#fff" stroke="#d4c4ea" stroke-width=".3"/><circle cx="399.3" cy="189.0" r="1.69" fill="#7238b2"/><circle cx="365.7" cy="196.7" r="3.48" fill="#fff" stroke="#d4c4ea" stroke-width=".3"/><circle cx="365.7" cy="196.7" r="1.69" fill="#7238b2"/><circle cx="405.4" cy="196.7" r="3.48" fill="#fff" stroke="#d4c4ea" stroke-width=".3"/><circle cx="405.4" cy="196.7" r="1.69" fill="#7238b2"/><circle cx="401.3" cy="218.1" r="3.48" fill="#fff" stroke="#d4c4ea" stroke-width=".3"/><circle cx="401.3" cy="218.1" r="1.69" fill="#7238b2"/><circle cx="387.4" cy="252.8" r="3.48" fill="#fff" stroke="#d4c4ea" stroke-width=".3"/><circle cx="387.4" cy="252.8" r="1.69" fill="#7238b2"/><circle cx="398.1" cy="254.8" r="3.48" fill="#fff" stroke="#d4c4ea" stroke-width=".3"/><circle cx="398.1" cy="254.8" r="1.69" fill="#7238b2"/><circle cx="393.5" cy="262.0" r="3.48" fill="#fff" stroke="#d4c4ea" stroke-width=".3"/><circle cx="393.5" cy="262.0" r="1.69" fill="#7238b2"/><circle cx="401.1" cy="259.8" r="3.48" fill="#fff" stroke="#d4c4ea" stroke-width=".3"/><circle cx="401.1" cy="259.8" r="1.69" fill="#7238b2"/><circle cx="369.0" cy="267.5" r="3.48" fill="#fff" stroke="#d4c4ea" stroke-width=".3"/><circle cx="369.0" cy="267.5" r="1.69" fill="#7238b2"/><circle cx="377.4" cy="266.0" r="3.48" fill="#fff" stroke="#d4c4ea" stroke-width=".3"/><circle cx="377.4" cy="266.0" r="1.69" fill="#7238b2"/><circle cx="375.6" cy="183.7" r="3.74" fill="#fff" stroke="#d4c4ea" stroke-width=".3"/><circle cx="375.6" cy="183.7" r="1.82" fill="#7238b2"/><circle cx="387.8" cy="205.8" r="3.74" fill="#fff" stroke="#d4c4ea" stroke-width=".3"/><circle cx="387.8" cy="205.8" r="1.82" fill="#7238b2"/><circle cx="375.4" cy="231.1" r="3.74" fill="#fff" stroke="#d4c4ea" stroke-width=".3"/><circle cx="375.4" cy="231.1" r="1.82" fill="#7238b2"/><circle cx="371.6" cy="244.9" r="3.74" fill="#fff" stroke="#d4c4ea" stroke-width=".3"/><circle cx="371.6" cy="244.9" r="1.82" fill="#7238b2"/><circle cx="379.4" cy="249.1" r="3.74" fill="#fff" stroke="#d4c4ea" stroke-width=".3"/><circle cx="379.4" cy="249.1" r="1.82" fill="#7238b2"/><circle cx="374.4" cy="253.3" r="3.74" fill="#fff" stroke="#d4c4ea" stroke-width=".3"/><circle cx="374.4" cy="253.3" r="1.82" fill="#7238b2"/><circle cx="376.4" cy="260.1" r="3.74" fill="#fff" stroke="#d4c4ea" stroke-width=".3"/><circle cx="376.4" cy="260.1" r="1.82" fill="#7238b2"/><circle cx="347.6" cy="269.3" r="3.74" fill="#fff" stroke="#d4c4ea" stroke-width=".3"/><circle cx="347.6" cy="269.3" r="1.82" fill="#7238b2"/><circle cx="372.1" cy="281.8" r="3.74" fill="#fff" stroke="#d4c4ea" stroke-width=".3"/><circle cx="372.1" cy="281.8" r="1.82" fill="#7238b2"/><circle cx="387.8" cy="221.9" r="4.01" fill="#fff" stroke="#d4c4ea" stroke-width=".3"/><circle cx="387.8" cy="221.9" r="1.95" fill="#7238b2"/><circle cx="377.9" cy="196.7" r="4.28" fill="#fff" stroke="#d4c4ea" stroke-width=".3"/><circle cx="377.9" cy="196.7" r="2.08" fill="#7238b2"/><circle cx="376.4" cy="239.5" r="4.28" fill="#fff" stroke="#d4c4ea" stroke-width=".3"/><circle cx="376.4" cy="239.5" r="2.08" fill="#7238b2"/><circle cx="388.6" cy="193.3" r="4.55" fill="#fff" stroke="#d4c4ea" stroke-width=".3"/><circle cx="388.6" cy="193.3" r="2.21" fill="#7238b2"/><circle cx="376.8" cy="222.6" r="4.55" fill="#fff" stroke="#d4c4ea" stroke-width=".3"/><circle cx="376.8" cy="222.6" r="2.21" fill="#7238b2"/><circle cx="384.3" cy="268.5" r="4.55" fill="#fff" stroke="#d4c4ea" stroke-width=".3"/><circle cx="384.3" cy="268.5" r="2.21" fill="#7238b2"/><circle cx="367.2" cy="207.4" r="4.81" fill="#fff" stroke="#d4c4ea" stroke-width=".3"/><circle cx="367.2" cy="207.4" r="2.34" fill="#7238b2"/><circle cx="388.6" cy="283.1" r="5.35" fill="#fff" stroke="#d4c4ea" stroke-width=".3"/><circle cx="388.6" cy="283.1" r="2.60" fill="#7238b2"/><text x="573.6" y="213.6" text-anchor="middle" font-family="Liberation Sans,sans-serif" font-weight="bold" font-size="6.1" fill="#222">Income vs. Education</text><path d="M516.3 227.8 L615.7 227.8" stroke="#8e8e8e" stroke-width=".6"/><text x="514.3" y="229.3" text-anchor="end" font-family="Liberation Sans,sans-serif" font-weight="bold" font-size="4.2" fill="#333">20,000</text><path d="M516.3 246.0 L615.7 246.0" stroke="#8e8e8e" stroke-width=".6"/><text x="514.3" y="247.5" text-anchor="end" font-family="Liberation Sans,sans-serif" font-weight="bold" font-size="4.2" fill="#333">16,000</text><path d="M516.3 264.2 L615.7 264.2" stroke="#8e8e8e" stroke-width=".6"/><text x="514.3" y="265.7" text-anchor="end" font-family="Liberation Sans,sans-serif" font-weight="bold" font-size="4.2" fill="#333">12,000</text><path d="M516.3 282.4 L615.7 282.4" stroke="#8e8e8e" stroke-width=".6"/><text x="514.3" y="283.9" text-anchor="end" font-family="Liberation Sans,sans-serif" font-weight="bold" font-size="4.2" fill="#333">8,000</text><path d="M516.3 300.5 L615.7 300.5" stroke="#8e8e8e" stroke-width=".6"/><text x="514.3" y="302.0" text-anchor="end" font-family="Liberation Sans,sans-serif" font-weight="bold" font-size="4.2" fill="#333">4,000</text><text transform="translate(500 267.2) rotate(-90)" text-anchor="middle" font-family="Liberation Sans,sans-serif" font-style="italic" font-size="4.6" fill="#333">2016 Pop Higher Education</text><text x="549.8" y="318" text-anchor="middle" font-family="Liberation Sans,sans-serif" font-weight="bold" font-size="4.2" fill="#333">100,000</text><text x="593.6" y="318" text-anchor="middle" font-family="Liberation Sans,sans-serif" font-weight="bold" font-size="4.2" fill="#333">200,000</text><text x="566.3" y="325.8" text-anchor="middle" font-family="Liberation Sans,sans-serif" font-style="italic" font-size="4.9" fill="#333">2016 Average Population Income ($)</text><path d="M522.5 294.6 L615.7 284.1" stroke="#f050e0" stroke-width=".9"/><circle cx="525.4" cy="222.2" r="1.7" fill="#f8ecc0" stroke="#6e4a3c" stroke-width=".5"/><circle cx="531.1" cy="255.4" r="1.7" fill="#f0a090" stroke="#6e4a3c" stroke-width=".5"/><circle cx="548.1" cy="252.5" r="1.7" fill="#f0a090" stroke="#6e4a3c" stroke-width=".5"/><circle cx="520.0" cy="275.8" r="1.7" fill="#e06060" stroke="#6e4a3c" stroke-width=".5"/><circle cx="524.3" cy="277.3" r="1.7" fill="#f0a090" stroke="#6e4a3c" stroke-width=".5"/><circle cx="535.6" cy="276.1" r="1.7" fill="#f8ecc0" stroke="#6e4a3c" stroke-width=".5"/><circle cx="520.0" cy="280.9" r="1.7" fill="#f8ecc0" stroke="#6e4a3c" stroke-width=".5"/><circle cx="545.3" cy="281.8" r="1.7" fill="#e06060" stroke="#6e4a3c" stroke-width=".5"/><circle cx="550.4" cy="283.8" r="1.7" fill="#f8ecc0" stroke="#6e4a3c" stroke-width=".5"/><circle cx="546.1" cy="286.6" r="1.7" fill="#f0a090" stroke="#6e4a3c" stroke-width=".5"/><circle cx="554.1" cy="288.9" r="1.7" fill="#f8ecc0" stroke="#6e4a3c" stroke-width=".5"/><circle cx="556.9" cy="289.7" r="1.7" fill="#f0a090" stroke="#6e4a3c" stroke-width=".5"/><circle cx="580.8" cy="277.8" r="1.7" fill="#f8ecc0" stroke="#6e4a3c" stroke-width=".5"/><circle cx="579.1" cy="289.7" r="1.7" fill="#f8ecc0" stroke="#6e4a3c" stroke-width=".5"/><circle cx="565.2" cy="297.7" r="1.7" fill="#f0a090" stroke="#6e4a3c" stroke-width=".5"/><circle cx="569.7" cy="298.8" r="1.7" fill="#f0a090" stroke="#6e4a3c" stroke-width=".5"/><circle cx="615.4" cy="300.8" r="1.7" fill="#f0a090" stroke="#6e4a3c" stroke-width=".5"/><circle cx="551.8" cy="293.2" r="1.7" fill="#f8ecc0" stroke="#6e4a3c" stroke-width=".5"/><circle cx="548.1" cy="296.0" r="1.7" fill="#f8ecc0" stroke="#6e4a3c" stroke-width=".5"/><circle cx="536.7" cy="290.9" r="1.7" fill="#f0a090" stroke="#6e4a3c" stroke-width=".5"/><circle cx="529.1" cy="286.6" r="1.7" fill="#e06060" stroke="#6e4a3c" stroke-width=".5"/><circle cx="529.9" cy="289.5" r="1.7" fill="#e06060" stroke="#6e4a3c" stroke-width=".5"/><circle cx="531.9" cy="290.3" r="1.7" fill="#f8ecc0" stroke="#6e4a3c" stroke-width=".5"/><circle cx="525.4" cy="285.2" r="1.7" fill="#f8ecc0" stroke="#6e4a3c" stroke-width=".5"/><circle cx="519.7" cy="288.6" r="1.7" fill="#f0a090" stroke="#6e4a3c" stroke-width=".5"/><circle cx="522.0" cy="291.5" r="1.7" fill="#f0a090" stroke="#6e4a3c" stroke-width=".5"/><circle cx="518.6" cy="293.2" r="1.7" fill="#f8ecc0" stroke="#6e4a3c" stroke-width=".5"/><circle cx="520.0" cy="295.1" r="1.7" fill="#f8ecc0" stroke="#6e4a3c" stroke-width=".5"/><circle cx="522.0" cy="296.6" r="1.7" fill="#f8ecc0" stroke="#6e4a3c" stroke-width=".5"/><circle cx="518.6" cy="298.0" r="1.7" fill="#f8ecc0" stroke="#6e4a3c" stroke-width=".5"/><circle cx="524.8" cy="295.1" r="1.7" fill="#f0a090" stroke="#6e4a3c" stroke-width=".5"/><circle cx="527.7" cy="298.0" r="1.7" fill="#e06060" stroke="#6e4a3c" stroke-width=".5"/><circle cx="529.6" cy="299.4" r="1.7" fill="#b02848" stroke="#6e4a3c" stroke-width=".5"/><circle cx="530.5" cy="302.2" r="1.7" fill="#e06060" stroke="#6e4a3c" stroke-width=".5"/><circle cx="528.5" cy="303.7" r="1.7" fill="#b02848" stroke="#6e4a3c" stroke-width=".5"/><circle cx="526.2" cy="305.1" r="1.7" fill="#e06060" stroke="#6e4a3c" stroke-width=".5"/><circle cx="523.4" cy="303.7" r="1.7" fill="#f0a090" stroke="#6e4a3c" stroke-width=".5"/><circle cx="520.0" cy="305.1" r="1.7" fill="#e06060" stroke="#6e4a3c" stroke-width=".5"/><circle cx="518.6" cy="302.2" r="1.7" fill="#f0a090" stroke="#6e4a3c" stroke-width=".5"/><circle cx="522.0" cy="307.4" r="1.7" fill="#e06060" stroke="#6e4a3c" stroke-width=".5"/><circle cx="524.8" cy="309.3" r="1.7" fill="#b02848" stroke="#6e4a3c" stroke-width=".5"/><circle cx="529.1" cy="309.3" r="1.7" fill="#e06060" stroke="#6e4a3c" stroke-width=".5"/><circle cx="531.9" cy="307.9" r="1.7" fill="#e06060" stroke="#6e4a3c" stroke-width=".5"/><circle cx="533.3" cy="310.2" r="1.7" fill="#e06060" stroke="#6e4a3c" stroke-width=".5"/><circle cx="535.6" cy="305.7" r="1.7" fill="#e06060" stroke="#6e4a3c" stroke-width=".5"/><circle cx="526.8" cy="311.3" r="1.7" fill="#b02848" stroke="#6e4a3c" stroke-width=".5"/><circle cx="520.6" cy="310.2" r="1.7" fill="#f0a090" stroke="#6e4a3c" stroke-width=".5"/><circle cx="523.4" cy="300.8" r="1.7" fill="#f8ecc0" stroke="#6e4a3c" stroke-width=".5"/><circle cx="521.1" cy="300.0" r="1.7" fill="#f8ecc0" stroke="#6e4a3c" stroke-width=".5"/><circle cx="525.7" cy="299.4" r="1.7" fill="#f0a090" stroke="#6e4a3c" stroke-width=".5"/><circle cx="531.4" cy="305.7" r="1.7" fill="#e06060" stroke="#6e4a3c" stroke-width=".5"/><circle cx="522.8" cy="305.7" r="1.7" fill="#e06060" stroke="#6e4a3c" stroke-width=".5"/><circle cx="630.8" cy="271" r=".9" fill="#e838d8"/><text x="633.4" y="272.4" font-family="Liberation Sans,sans-serif" font-size="3.6" fill="#464646">8.2 x 11.63</text><text x="407.3" y="320.7" text-anchor="middle" font-family="Liberation Sans,sans-serif" font-weight="bold" font-size="6.25" fill="#222">Distribution of Education Levels</text><path d="M355.6 329.9 L426.0 329.9" stroke="#6a6a6a" stroke-width=".7"/><text x="352.4" y="331.5" text-anchor="end" font-family="Liberation Sans,sans-serif" font-weight="bold" font-size="4.4" fill="#333">15</text><path d="M355.6 345.9 L426.0 345.9" stroke="#6a6a6a" stroke-width=".7"/><text x="352.4" y="347.5" text-anchor="end" font-family="Liberation Sans,sans-serif" font-weight="bold" font-size="4.4" fill="#333">10</text><path d="M355.6 361.4 L426.0 361.4" stroke="#6a6a6a" stroke-width=".7"/><text x="352.4" y="363.0" text-anchor="end" font-family="Liberation Sans,sans-serif" font-weight="bold" font-size="4.4" fill="#333">5</text><path d="M355.6 377.0 L426.0 377.0" stroke="#6a6a6a" stroke-width=".7"/><text x="352.4" y="378.6" text-anchor="end" font-family="Liberation Sans,sans-serif" font-weight="bold" font-size="4.4" fill="#333">0</text><text transform="translate(340 352.3) rotate(-90)" text-anchor="middle" font-family="Liberation Sans,sans-serif" font-style="italic" font-size="4.6" fill="#222">Count</text><rect x="355.60" y="361.30" width="3.52" height="15.70" fill="#c4e0ee" stroke="#a4cfe2" stroke-width=".3"/><rect x="359.12" y="336.18" width="3.52" height="40.82" fill="#c4e0ee" stroke="#a4cfe2" stroke-width=".3"/><rect x="362.64" y="351.88" width="3.52" height="25.12" fill="#c4e0ee" stroke="#a4cfe2" stroke-width=".3"/><rect x="366.16" y="364.44" width="3.52" height="12.56" fill="#c4e0ee" stroke="#a4cfe2" stroke-width=".3"/><rect x="369.68" y="364.44" width="3.52" height="12.56" fill="#c4e0ee" stroke="#a4cfe2" stroke-width=".3"/><rect x="373.20" y="345.60" width="3.52" height="31.40" fill="#c4e0ee" stroke="#a4cfe2" stroke-width=".3"/><rect x="376.72" y="370.72" width="3.52" height="6.28" fill="#c4e0ee" stroke="#a4cfe2" stroke-width=".3"/><rect x="380.24" y="361.30" width="3.52" height="15.70" fill="#c4e0ee" stroke="#a4cfe2" stroke-width=".3"/><rect x="383.76" y="370.72" width="3.52" height="6.28" fill="#c4e0ee" stroke="#a4cfe2" stroke-width=".3"/><rect x="387.28" y="376.53" width="3.52" height="0.47" fill="#c4e0ee" stroke="#a4cfe2" stroke-width=".3"/><rect x="390.80" y="376.53" width="3.52" height="0.47" fill="#c4e0ee" stroke="#a4cfe2" stroke-width=".3"/><rect x="394.32" y="376.53" width="3.52" height="0.47" fill="#c4e0ee" stroke="#a4cfe2" stroke-width=".3"/><rect x="397.84" y="370.72" width="3.52" height="6.28" fill="#c4e0ee" stroke="#a4cfe2" stroke-width=".3"/><rect x="401.36" y="376.53" width="3.52" height="0.47" fill="#c4e0ee" stroke="#a4cfe2" stroke-width=".3"/><rect x="404.88" y="376.53" width="3.52" height="0.47" fill="#c4e0ee" stroke="#a4cfe2" stroke-width=".3"/><rect x="408.40" y="376.53" width="3.52" height="0.47" fill="#c4e0ee" stroke="#a4cfe2" stroke-width=".3"/><rect x="411.92" y="376.53" width="3.52" height="0.47" fill="#c4e0ee" stroke="#a4cfe2" stroke-width=".3"/><rect x="415.44" y="376.53" width="3.52" height="0.47" fill="#c4e0ee" stroke="#a4cfe2" stroke-width=".3"/><rect x="418.96" y="376.53" width="3.52" height="0.47" fill="#c4e0ee" stroke="#a4cfe2" stroke-width=".3"/><rect x="422.48" y="373.86" width="3.52" height="3.14" fill="#c4e0ee" stroke="#a4cfe2" stroke-width=".3"/><path d="M357.7 328.3 L357.7 377" stroke="#e0a050" stroke-width=".7"/><path d="M366.6 328.3 L366.6 377" stroke="#7a50c0" stroke-width="1.1"/><path d="M370.0 328.3 L370.0 377" stroke="#e84838" stroke-width="1.1"/><path d="M381.7 328.3 L381.7 377" stroke="#e0a050" stroke-width=".7"/><text transform="translate(357.2 380.8) rotate(-47)" text-anchor="end" font-family="Liberation Sans,sans-serif" font-weight="bold" font-size="3.9" fill="#222">1,903</text><text transform="translate(367.3 380.8) rotate(-47)" text-anchor="end" font-family="Liberation Sans,sans-serif" font-weight="bold" font-size="3.9" fill="#222">4,614.43</text><text transform="translate(377.3 380.8) rotate(-47)" text-anchor="end" font-family="Liberation Sans,sans-serif" font-weight="bold" font-size="3.9" fill="#222">7,325.86</text><text transform="translate(387.4 380.8) rotate(-47)" text-anchor="end" font-family="Liberation Sans,sans-serif" font-weight="bold" font-size="3.9" fill="#222">10,037.29</text><text transform="translate(397.4 380.8) rotate(-47)" text-anchor="end" font-family="Liberation Sans,sans-serif" font-weight="bold" font-size="3.9" fill="#222">12,748.71</text><text transform="translate(407.5 380.8) rotate(-47)" text-anchor="end" font-family="Liberation Sans,sans-serif" font-weight="bold" font-size="3.9" fill="#222">15,460.14</text><text transform="translate(417.5 380.8) rotate(-47)" text-anchor="end" font-family="Liberation Sans,sans-serif" font-weight="bold" font-size="3.9" fill="#222">18,171.57</text><text transform="translate(427.6 380.8) rotate(-47)" text-anchor="end" font-family="Liberation Sans,sans-serif" font-weight="bold" font-size="3.9" fill="#222">21,283</text><path d="M437 356.9 l3 0" stroke="#e84838" stroke-width="1.3"/><text x="441.4" y="358.4" font-family="Liberation Sans,sans-serif" font-weight="bold" font-size="4.4" fill="#222">Mean : 5,497.39</text><path d="M437 365.3 l3 0" stroke="#7a50c0" stroke-width="1.3"/><text x="441.4" y="366.8" font-family="Liberation Sans,sans-serif" font-weight="bold" font-size="4.4" fill="#222">Median : 4,625</text><path d="M437 373.5 l3 0" stroke="#e0a050" stroke-width="1.3"/><text x="441.4" y="375.0" font-family="Liberation Sans,sans-serif" font-weight="bold" font-size="4.4" fill="#222">StdDev : 3,231.94</text><text x="399.5" y="403.8" text-anchor="middle" font-family="Liberation Sans,sans-serif" font-style="italic" font-size="4.9" fill="#333">p 25-64: Univ. Cert, Diploma, Bachelor's Degree Or Above</text></svg><div class="a" style="left:209px;top:439.4px;width:64.5px;height:13.2px;background:#202020"></div><div class="t" style="left:212.4px;top:441px;color:#ececec">1:171,505</div><svg width="4" height="3" viewBox="0 0 4 3" style="left:266.6px;top:445px"><path d="M0 0 L3.8 0 L1.9 2.3z" fill="#d0d0d0"/></svg><div class="a" style="left:277px;top:441px;width:1px;height:10.5px;background:#8a8a8a"></div><div class="a" style="left:282px;top:439.4px;width:31px;height:13.2px;background:#202020"></div><div class="t" style="left:285.4px;top:441px;color:#ececec">54%</div><svg width="4" height="3" viewBox="0 0 4 3" style="left:306.4px;top:445px"><path d="M0 0 L3.8 0 L1.9 2.3z" fill="#d0d0d0"/></svg><div class="a" style="left:316.4px;top:441px;width:1px;height:10.5px;background:#8a8a8a"></div><div class="a" style="left:319.6px;top:439.4px;width:13.4px;height:13.2px;background:#1677cf"></div><svg width="700" height="458" viewBox="0 0 700 458" style="left:0;top:0"><path d="M322 442 l6 0 l0 6 l-6 0z M325 442 l0 6 M322 445 l6 0" stroke="#9fd0ff" stroke-width=".7" fill="none"/><path d="M327.6 449.6 l4 0 M329.6 447.6 l0 4" stroke="#fff" stroke-width=".9"/><path d="M337.4 441.6 l9 0 l0 9 l-9 0z M339.6 441.6 l0 9 M341.9 441.6 l0 9 M344.2 441.6 l0 9 M337.4 443.8 l9 0 M337.4 446.1 l9 0 M337.4 448.4 l9 0" stroke="#b8b8b8" stroke-width=".6" fill="#555"/></svg><div class="a" style="left:350.2px;top:441px;width:1px;height:10.5px;background:#8a8a8a"></div><div class="t" style="left:481.6px;top:441px;color:#ececec">9.428 , 8.169</div>
</body></html>
